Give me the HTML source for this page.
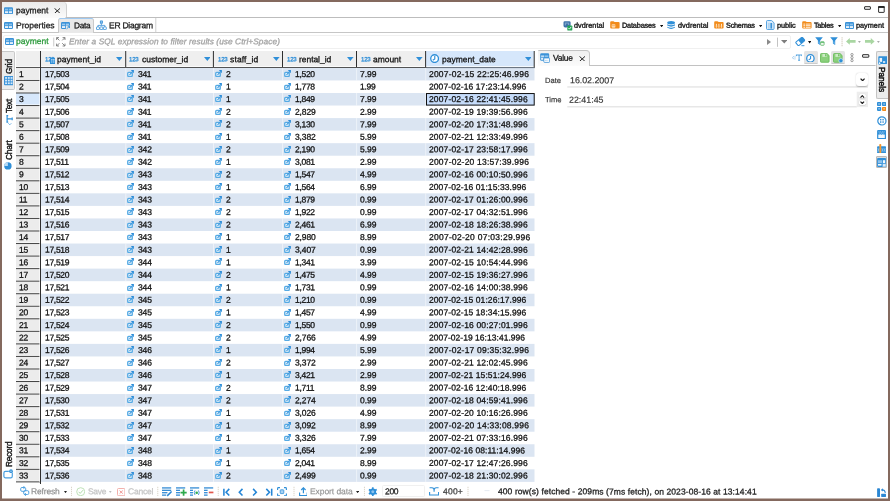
<!DOCTYPE html>
<html><head><meta charset="utf-8"><title>payment</title>
<style>
html,body{margin:0;padding:0;}
body{width:890px;height:501px;overflow:hidden;background:#84695e;font-family:"Liberation Sans",sans-serif;}
#app{position:absolute;left:0;top:0;width:890px;height:501px;overflow:hidden;will-change:transform;}
.b{position:absolute;display:block;}
.t{position:absolute;white-space:pre;display:block;-webkit-text-stroke:0.28px;}
</style></head><body><div id="app">

<svg class="b" style="left:2px;top:2px" width="886" height="497"><rect x="0.00" y="0.00" width="886.00" height="496.50" fill="#ffffff"/></svg>
<div class="b" style="left:2px;top:498px;width:886px;height:1px;background:#c2b4ae"></div>
<div class="b" style="left:2px;top:2px;width:63.5px;height:15.5px;background:linear-gradient(#ebebeb,#f4f4f4 60%,#fbfbfb);border-right:1px solid #d0d0d0;border-top-right-radius:4px;"></div>
<svg class="b" style="left:65px;top:17px" width="823" height="1"><rect x="0.50" y="0.00" width="822.50" height="1.00" fill="#bdbdbd"/></svg>
<svg class="b" style="left:4.00px;top:6.70px;" width="9" height="7.3" viewBox="0 0 9 7"><rect x="0" y="0" width="9" height="7" rx="1.2" fill="#3b92d8"/><rect x="1" y="1.6" width="3.1" height="1.7" fill="#8cc2ec"/><rect x="4.9" y="1.6" width="3.1" height="1.7" fill="#8cc2ec"/><rect x="1" y="4.1" width="3.1" height="1.9" fill="#e6f1fb"/><rect x="4.9" y="4.1" width="3.1" height="1.9" fill="#e6f1fb"/></svg>
<span class="t" style="left:16.10px;top:6px;font-size:8.50px;line-height:8.50px;color:#1a1a1a;transform:translateY(0.25px) rotate(0.05deg);letter-spacing:-0.033px;">payment</span>
<svg class="b" style="left:53.80px;top:7.70px;" width="6.6" height="5.8" viewBox="0 0 6.6 5.8"><path d="M0.5 0.3 L6.1 5.4 M6.1 0.3 L0.5 5.4" stroke="#1c1c1c" stroke-width="0.95" fill="none"/></svg>
<svg class="b" style="left:864.00px;top:5.80px;" width="7.2" height="4.2" viewBox="0 0 7.2 4.2"><rect x="0.6" y="0.7" width="5.8" height="2.6" rx="0.3" fill="#fff" stroke="#1c1c1c" stroke-width="0.95"/></svg>
<svg class="b" style="left:877.50px;top:6.00px;" width="7" height="7" viewBox="0 0 7 7"><rect x="0.6" y="0.6" width="5.6" height="5.8" rx="0.4" fill="#fff" stroke="#1c1c1c" stroke-width="0.9"/><rect x="0.2" y="0.2" width="6.4" height="1.7" fill="#1c1c1c"/></svg>
<div class="b" style="left:2.00px;top:32.00px;width:886.00px;height:1.00px;background:#c6c6c6;"></div>
<svg class="b" style="left:4.00px;top:22.00px;" width="9" height="7" viewBox="0 0 9 7"><rect x="0" y="0" width="9" height="7" rx="1.2" fill="#3b92d8"/><rect x="1" y="1.6" width="3.1" height="1.7" fill="#8cc2ec"/><rect x="4.9" y="1.6" width="3.1" height="1.7" fill="#8cc2ec"/><rect x="1" y="4.1" width="3.1" height="1.9" fill="#e6f1fb"/><rect x="4.9" y="4.1" width="3.1" height="1.9" fill="#e6f1fb"/></svg>
<span class="t" style="left:16.20px;top:21px;font-size:8.50px;line-height:8.50px;color:#1a1a1a;transform:translateY(0.30px) rotate(0.05deg);letter-spacing:-0.015px;">Properties</span>
<div class="b" style="left:58.4px;top:18px;width:35.4px;height:14.5px;background:#e9e9e9;border:1px solid #c9c9c9;border-bottom:none;border-top:1.4px solid #9fc9f1;border-radius:2.5px 2.5px 0 0;box-sizing:border-box;"></div>
<svg class="b" style="left:61.00px;top:22.00px;" width="9.5" height="7.5" viewBox="0 0 9.5 7.5"><rect x="0" y="0" width="9" height="7" rx="1.2" fill="#3b92d8"/><rect x="1" y="1.6" width="3.1" height="1.7" fill="#9ccaf0"/><rect x="4.9" y="1.6" width="3.1" height="1.7" fill="#9ccaf0"/><rect x="1" y="4.1" width="3.1" height="1.9" fill="#e6f1fb"/><rect x="4.9" y="3.6" width="4.6" height="3.9" fill="#e8e8e8"/><path d="M5.6 6.9 L8.4 4.3 M6.6 4.2 H8.5 V6.1" stroke="#2f8fd8" stroke-width="0.9" fill="none"/></svg>
<span class="t" style="left:73.90px;top:21px;font-size:8.30px;line-height:8.30px;color:#1a1a1a;transform:translateY(0.37px) rotate(0.05deg);letter-spacing:-0.300px;">Data</span>
<svg class="b" style="left:95.80px;top:20.30px;" width="10.8" height="10.2" viewBox="0 0 10.8 10.2"><rect x="3.9" y="0.4" width="3" height="3.4" rx="0.7" fill="#3b92d8"/><rect x="4.7" y="1.3" width="1.4" height="1.4" fill="#9ccaf0"/><path d="M5.4 3.8 V5.4 M1.9 7 V5.4 H8.9 V7" stroke="#3b92d8" stroke-width="0.8" fill="none"/><rect x="0.5" y="6.9" width="2.9" height="2.7" rx="0.6" fill="#fff" stroke="#3b92d8" stroke-width="0.85"/><rect x="3.95" y="6.9" width="2.9" height="2.7" rx="0.6" fill="#fff" stroke="#3b92d8" stroke-width="0.85"/><rect x="7.4" y="6.9" width="2.9" height="2.7" rx="0.6" fill="#fff" stroke="#3b92d8" stroke-width="0.85"/></svg>
<span class="t" style="left:109.00px;top:21px;font-size:8.50px;line-height:8.50px;color:#1a1a1a;transform:translateY(0.30px) rotate(0.05deg);letter-spacing:-0.254px;">ER Diagram</span>
<svg class="b" style="left:155px;top:18px" width="2" height="14"><rect x="0.30" y="0.00" width="1.00" height="14.00" fill="#cfcfcf"/></svg>
<svg class="b" style="left:563.00px;top:20.90px;" width="9.6" height="9.8" viewBox="0 0 9.6 9.8"><path d="M0.5 1.4 Q0.5 0.2 1.8 0.2 H6.2 Q7.6 0.2 7.6 1.6 V4.6 Q7.6 6.4 6 6.6 L5.2 6.6 L4.6 5.4 L3.8 6.6 H2.2 Q0.5 6.4 0.5 4.8 Z" fill="#3b70a8"/><path d="M2.3 1.5 V4.4 M4 1.2 V3.2 M5.7 1.6 V4" stroke="#c3d8ee" stroke-width="0.6"/><rect x="4.3" y="4.4" width="5" height="5.2" rx="0.9" fill="#25a457"/><path d="M5.5 7.1 L6.5 8.1 L8.2 5.9" stroke="#fff" stroke-width="0.9" fill="none"/></svg>
<span class="t" style="left:573.80px;top:21px;font-size:7.30px;line-height:7.30px;color:#222;transform:translateY(0.72px) rotate(0.05deg);letter-spacing:0.021px;-webkit-text-stroke:0.38px;">dvdrental</span>
<svg class="b" style="left:610.10px;top:21.30px;" width="9.8" height="7.8" viewBox="0 0 9.8 7.8"><path d="M0.2 1.2 Q0.2 0.2 1.2 0.2 H3.4 Q3.9 0.2 4.3 0.7 L4.7 1.1 H8.6 Q9.6 1.1 9.6 2.1 V6.6 Q9.6 7.6 8.6 7.6 H1.2 Q0.2 7.6 0.2 6.6 Z" fill="#f28c1c"/><rect x="1.6" y="2.9" width="3.8" height="3.9" rx="1" fill="#fcd7a8"/><path d="M1.6 4.2 H5.4" stroke="#f28c1c" stroke-width="0.5"/></svg>
<span class="t" style="left:621.70px;top:21px;font-size:7.30px;line-height:7.30px;color:#222;transform:translateY(0.72px) rotate(0.05deg);letter-spacing:-0.162px;-webkit-text-stroke:0.38px;">Databases</span>
<svg class="b" style="left:659.90px;top:24.70px;" width="3.2" height="2.3" viewBox="0 0 3.2 2.3"><path d="M0 0H3.2L1.6 2.3Z" fill="#111"/></svg>
<svg class="b" style="left:666.90px;top:21.20px;" width="8.2" height="8.4" viewBox="0 0 8.2 8.4"><ellipse cx="4.1" cy="1.8" rx="3.9" ry="1.7" fill="#2f8fd8"/><path d="M0.2 3.2 Q4.1 5.5 8 3.2 V4.6 Q4.1 6.9 0.2 4.6 Z" fill="#2f8fd8"/><path d="M0.2 5.7 Q4.1 8 8 5.7 V6.6 Q4.1 9.2 0.2 6.6 Z" fill="#2f8fd8"/></svg>
<span class="t" style="left:677.80px;top:21px;font-size:7.30px;line-height:7.30px;color:#222;transform:translateY(0.72px) rotate(0.05deg);letter-spacing:0.046px;-webkit-text-stroke:0.38px;">dvdrental</span>
<svg class="b" style="left:714.10px;top:21.30px;" width="9.8" height="7.8" viewBox="0 0 9.8 7.8"><path d="M0.2 1.2 Q0.2 0.2 1.2 0.2 H3.4 Q3.9 0.2 4.3 0.7 L4.7 1.1 H8.6 Q9.6 1.1 9.6 2.1 V6.6 Q9.6 7.6 8.6 7.6 H1.2 Q0.2 7.6 0.2 6.6 Z" fill="#f28c1c"/><g fill="#fff3e2"><rect x="1.9" y="2.8" width="0.9" height="3.8"/><rect x="4.45" y="2.8" width="0.9" height="3.8"/><rect x="7" y="2.8" width="0.9" height="3.8"/></g><path d="M1.2 5.2 H8.6" stroke="#f8b871" stroke-width="0.6"/></svg>
<span class="t" style="left:725.70px;top:21px;font-size:7.30px;line-height:7.30px;color:#222;transform:translateY(0.72px) rotate(0.05deg);letter-spacing:-0.238px;-webkit-text-stroke:0.38px;">Schemas</span>
<svg class="b" style="left:758.50px;top:24.70px;" width="3.2" height="2.3" viewBox="0 0 3.2 2.3"><path d="M0 0H3.2L1.6 2.3Z" fill="#111"/></svg>
<svg class="b" style="left:766.20px;top:20.30px;" width="8.6" height="10" viewBox="0 0 8.6 10"><path d="M0.5 1.5 Q0.5 0.5 1.5 0.5 H5.6 L8.1 2.9 V8.5 Q8.1 9.5 7.1 9.5 H1.5 Q0.5 9.5 0.5 8.5 Z" fill="#d9eaf9" stroke="#4a9de0" stroke-width="0.9"/><rect x="4.4" y="3" width="1.7" height="5.6" fill="#3b92d8"/><rect x="2.2" y="3" width="1.4" height="5.6" fill="#a9d0f1"/></svg>
<span class="t" style="left:777.10px;top:21px;font-size:7.30px;line-height:7.30px;color:#222;transform:translateY(0.72px) rotate(0.05deg);letter-spacing:-0.094px;-webkit-text-stroke:0.38px;">public</span>
<svg class="b" style="left:802.20px;top:21.30px;" width="9.8" height="7.8" viewBox="0 0 9.8 7.8"><path d="M0.2 1.2 Q0.2 0.2 1.2 0.2 H3.4 Q3.9 0.2 4.3 0.7 L4.7 1.1 H8.6 Q9.6 1.1 9.6 2.1 V6.6 Q9.6 7.6 8.6 7.6 H1.2 Q0.2 7.6 0.2 6.6 Z" fill="#f28c1c"/><g fill="#fff1de"><rect x="1.4" y="2.6" width="1.9" height="1"/><rect x="4" y="2.6" width="4.6" height="1"/><rect x="1.4" y="4.2" width="1.9" height="1"/><rect x="4" y="4.2" width="4.6" height="1"/><rect x="1.4" y="5.8" width="1.9" height="1"/><rect x="4" y="5.8" width="4.6" height="1"/></g></svg>
<span class="t" style="left:814.10px;top:21px;font-size:7.30px;line-height:7.30px;color:#222;transform:translateY(0.72px) rotate(0.05deg);letter-spacing:-0.300px;-webkit-text-stroke:0.38px;">Tables</span>
<svg class="b" style="left:837.70px;top:24.70px;" width="3.2" height="2.3" viewBox="0 0 3.2 2.3"><path d="M0 0H3.2L1.6 2.3Z" fill="#111"/></svg>
<svg class="b" style="left:845.00px;top:21.80px;" width="9" height="7" viewBox="0 0 9 7"><rect x="0" y="0" width="9" height="7" rx="1.2" fill="#3b92d8"/><rect x="1" y="1.6" width="3.1" height="1.7" fill="#8cc2ec"/><rect x="4.9" y="1.6" width="3.1" height="1.7" fill="#8cc2ec"/><rect x="1" y="4.1" width="3.1" height="1.9" fill="#e6f1fb"/><rect x="4.9" y="4.1" width="3.1" height="1.9" fill="#e6f1fb"/></svg>
<span class="t" style="left:856.10px;top:21px;font-size:7.30px;line-height:7.30px;color:#222;transform:translateY(0.72px) rotate(0.05deg);-webkit-text-stroke:0.38px;">payment</span>
<div class="b" style="left:3px;top:35px;width:788px;height:13.5px;border:1px solid #f0f0f0;border-radius:2px;box-sizing:border-box;background:#fff"></div>
<svg class="b" style="left:5.30px;top:38.20px;" width="9" height="7" viewBox="0 0 9 7"><rect x="0" y="0" width="9" height="7" rx="1.2" fill="#3b92d8"/><rect x="1" y="1.6" width="3.1" height="1.7" fill="#8cc2ec"/><rect x="4.9" y="1.6" width="3.1" height="1.7" fill="#8cc2ec"/><rect x="1" y="4.1" width="3.1" height="1.9" fill="#e6f1fb"/><rect x="4.9" y="4.1" width="3.1" height="1.9" fill="#e6f1fb"/></svg>
<span class="t" style="left:16.00px;top:37px;font-size:8.50px;line-height:8.50px;color:#2c9a3c;transform:translateY(0.10px) rotate(0.05deg);letter-spacing:-0.016px;">payment</span>
<svg class="b" style="left:53px;top:37px" width="2" height="10"><rect x="0.40" y="0.60" width="0.80" height="8.80" fill="#bdbdbd"/></svg>
<svg class="b" style="left:56.00px;top:37.00px;" width="9.6" height="9.6" viewBox="0 0 9.6 9.6"><g stroke="#6a6a6a" stroke-width="0.8" fill="none"><path d="M0.6 3 V0.6 H3 M0.8 0.8 L3.4 3.4"/><path d="M6.6 0.6 H9 V3 M8.8 0.8 L6.2 3.4"/><path d="M0.6 6.6 V9 H3 M0.8 8.8 L3.4 6.2"/><path d="M6.6 9 H9 V6.6 M8.8 8.8 L6.2 6.2"/></g></svg>
<span class="t" style="left:68.50px;top:37px;font-size:8.30px;line-height:8.30px;color:#a3a3a3;transform:translateY(0.27px) rotate(0.05deg);letter-spacing:0.076px;font-style:italic;">Enter a SQL expression to filter results (use Ctrl+Space)</span>
<svg class="b" style="left:767.00px;top:39.20px;" width="4" height="6" viewBox="0 0 4 6"><path d="M0 0 L4 3 L0 6Z" fill="#8a8a8a"/></svg>
<svg class="b" style="left:777px;top:37px" width="1" height="10"><rect x="0.20" y="0.60" width="0.80" height="9.20" fill="#b4b4b4"/></svg>
<svg class="b" style="left:780.60px;top:40.20px;" width="6.6" height="3.4" viewBox="0 0 6.6 3.4"><path d="M0 0H6.6L3.3 3.4Z" fill="#7d7d7d"/></svg>
<svg class="b" style="left:795.40px;top:36.80px;" width="11" height="10" viewBox="0 0 11 10"><g transform="rotate(-40 5.2 4.4)"><rect x="0.9" y="2.1" width="8.6" height="4.6" rx="1" fill="#fff" stroke="#2f8fd8" stroke-width="1"/><rect x="4.4" y="2.1" width="5.1" height="4.6" rx="0.8" fill="#2f8fd8"/></g><path d="M6.4 8.7 H9.4" stroke="#2f8fd8" stroke-width="0.9"/></svg>
<svg class="b" style="left:807.80px;top:41.20px;" width="3.3" height="2.4" viewBox="0 0 3.3 2.4"><path d="M0 0H3.3L1.65 2.4Z" fill="#111"/></svg>
<svg class="b" style="left:815.00px;top:37.30px;" width="10.5" height="9" viewBox="0 0 10.5 9"><path d="M0.2 0.3 H7.8 L5.2 3.6 V8 L2.9 6.6 V3.6 Z" fill="#2f8fd8"/><path d="M3.2 4.4 H4.9 V7.4 L3.2 6.4 Z" fill="#62aee6"/><rect x="5.6" y="4.8" width="3.5" height="3.5" rx="0.6" fill="#f3faf1" stroke="#5cb86a" stroke-width="0.8"/><rect x="5.5" y="4.7" width="3.7" height="1.1" fill="#5cb86a"/></svg>
<svg class="b" style="left:829.50px;top:37.30px;" width="10.5" height="9" viewBox="0 0 10.5 9"><path d="M0.2 0.3 H7.8 L5.2 3.6 V8 L2.9 6.6 V3.6 Z" fill="#2f8fd8"/><path d="M3.2 4.4 H4.9 V7.4 L3.2 6.4 Z" fill="#62aee6"/></svg>
<svg class="b" style="left:841px;top:37px" width="2" height="2"><rect x="0.60" y="0.40" width="0.90" height="1.00" fill="#bcb19b"/></svg>
<svg class="b" style="left:841px;top:39px" width="2" height="2"><rect x="0.60" y="0.35" width="0.90" height="1.00" fill="#bcb19b"/></svg>
<svg class="b" style="left:841px;top:41px" width="2" height="2"><rect x="0.60" y="0.30" width="0.90" height="1.00" fill="#bcb19b"/></svg>
<svg class="b" style="left:841px;top:43px" width="2" height="2"><rect x="0.60" y="0.25" width="0.90" height="1.00" fill="#bcb19b"/></svg>
<svg class="b" style="left:841px;top:45px" width="2" height="2"><rect x="0.60" y="0.20" width="0.90" height="1.00" fill="#bcb19b"/></svg>
<svg class="b" style="left:846.20px;top:38.40px;" width="10" height="6.8" viewBox="0 0 10 6.8"><path d="M0 3.4 L3.8 0 V2.05 H9.6 V4.75 H3.8 V6.8 Z" fill="#a9d6a2"/></svg>
<svg class="b" style="left:858.20px;top:41.30px;" width="2.8" height="1.9" viewBox="0 0 2.8 1.9"><path d="M0 0H2.8L1.4 1.9Z" fill="#a8a8a8"/></svg>
<svg class="b" style="left:864.80px;top:38.40px;" width="10" height="6.8" viewBox="0 0 10 6.8"><path d="M9.6 3.4 L5.8 0 V2.05 H0 V4.75 H5.8 V6.8 Z" fill="#a9d6a2"/></svg>
<svg class="b" style="left:877.00px;top:41.30px;" width="2.8" height="1.9" viewBox="0 0 2.8 1.9"><path d="M0 0H2.8L1.4 1.9Z" fill="#a8a8a8"/></svg>
<div class="b" style="left:2px;top:50.5px;width:12.5px;height:39.5px;background:#ececec;border:1px solid #c9c9c9;border-left:none;box-sizing:border-box;border-radius:0 2px 2px 0"></div>
<span class="t" style="left:5.15px;top:73.80px;font-size:8.30px;line-height:8.30px;color:#1a1a1a;letter-spacing:-0.226px;-webkit-text-stroke:0.4px;transform-origin:0 0;transform:rotate(-90deg);">Grid</span>
<svg class="b" style="left:3.90px;top:76.40px;" width="9.6" height="9.2" viewBox="0 0 9.6 9.2"><rect x="0" y="0" width="9.6" height="9.2" rx="1" fill="#3b92d8"/><g fill="#d9ebfa"><rect x="1.1" y="1.1" width="1.9" height="1.7"/><rect x="3.85" y="1.1" width="1.9" height="1.7"/><rect x="6.6" y="1.1" width="1.9" height="1.7"/><rect x="1.1" y="3.75" width="1.9" height="1.7"/><rect x="3.85" y="3.75" width="1.9" height="1.7"/><rect x="6.6" y="3.75" width="1.9" height="1.7"/><rect x="1.1" y="6.4" width="1.9" height="1.7"/><rect x="3.85" y="6.4" width="1.9" height="1.7"/><rect x="6.6" y="6.4" width="1.9" height="1.7"/></g></svg>
<span class="t" style="left:5.15px;top:113.20px;font-size:8.30px;line-height:8.30px;color:#1a1a1a;letter-spacing:-0.340px;-webkit-text-stroke:0.4px;transform-origin:0 0;transform:rotate(-90deg);">Text</span>
<svg class="b" style="left:6.00px;top:115.40px;" width="6.8" height="10.6" viewBox="0 0 6.8 10.6"><path d="M1.1 0.5 V7.3 M0.4 0.6 H2.2 M0.4 7.2 H2.2 M1.1 3.9 H6.2 M6.2 2.5 V5.3" stroke="#2f8fd8" stroke-width="1.2" fill="none"/><path d="M2.3 8.3 L3.8 9.8 L5.3 8.3" stroke="#5aa7e2" stroke-width="0.85" fill="none"/></svg>
<span class="t" style="left:5.15px;top:159.60px;font-size:8.30px;line-height:8.30px;color:#1a1a1a;letter-spacing:-0.124px;-webkit-text-stroke:0.4px;transform-origin:0 0;transform:rotate(-90deg);">Chart</span>
<svg class="b" style="left:4.20px;top:161.80px;" width="7.8" height="7.8" viewBox="0 0 7.8 7.8"><circle cx="3.9" cy="3.9" r="3.7" fill="#2f8fd8"/><path d="M3.9 3.9 V0.2 A3.7 3.7 0 0 0 0.2 3.9 Z" fill="#b9dbf5"/></svg>
<span class="t" style="left:5.15px;top:467.20px;font-size:8.30px;line-height:8.30px;color:#1a1a1a;letter-spacing:-0.231px;-webkit-text-stroke:0.4px;transform-origin:0 0;transform:rotate(-90deg);">Record</span>
<svg class="b" style="left:3.30px;top:469.20px;" width="10.6" height="9.8" viewBox="0 0 10.6 9.8"><rect x="0.9" y="2.4" width="8.4" height="6.4" rx="1.6" fill="#fff" stroke="#4a9fe0" stroke-width="1.2"/><circle cx="8" cy="2.2" r="2.1" fill="#fff"/><circle cx="8" cy="2.2" r="1.85" fill="#2f8fd8"/><path d="M7 2.2 H9" stroke="#cfe6f8" stroke-width="0.7"/></svg>
<svg class="b" style="left:16px;top:51px" width="25" height="16"><rect x="0.00" y="0.00" width="24.50" height="16.00" fill="#efefef"/></svg>
<svg class="b" style="left:41px;top:51px" width="85" height="16"><rect x="0.00" y="0.00" width="84.50" height="15.50" fill="#efefef"/></svg>
<svg class="b" style="left:126px;top:51px" width="88" height="16"><rect x="0.00" y="0.00" width="87.20" height="15.50" fill="#efefef"/></svg>
<svg class="b" style="left:214px;top:51px" width="69" height="16"><rect x="0.00" y="0.00" width="68.30" height="15.50" fill="#efefef"/></svg>
<svg class="b" style="left:283px;top:51px" width="74" height="16"><rect x="0.00" y="0.00" width="73.30" height="15.50" fill="#efefef"/></svg>
<svg class="b" style="left:357px;top:51px" width="69" height="16"><rect x="0.00" y="0.00" width="68.40" height="15.50" fill="#efefef"/></svg>
<svg class="b" style="left:426px;top:51px" width="108" height="16"><rect x="0.00" y="0.00" width="108.00" height="15.50" fill="#d6e7fb"/></svg>
<svg class="b" style="left:16px;top:66px" width="518" height="1"><rect x="0.00" y="0.50" width="518.00" height="0.50" fill="#ffffff"/></svg>
<div class="b" style="left:40.00px;top:51.00px;width:1.00px;height:17.00px;background:#2e2e2e;"></div>
<svg class="b" style="left:125px;top:51px" width="2" height="17"><rect x="0.20" y="0.00" width="1.00" height="16.50" fill="#2e2e2e"/></svg>
<svg class="b" style="left:212px;top:51px" width="2" height="17"><rect x="0.90" y="0.00" width="1.00" height="16.50" fill="#2e2e2e"/></svg>
<svg class="b" style="left:282px;top:51px" width="1" height="17"><rect x="0.00" y="0.00" width="1.00" height="16.50" fill="#2e2e2e"/></svg>
<svg class="b" style="left:356px;top:51px" width="1" height="17"><rect x="0.00" y="0.00" width="1.00" height="16.50" fill="#2e2e2e"/></svg>
<svg class="b" style="left:425px;top:51px" width="2" height="17"><rect x="0.10" y="0.00" width="1.00" height="16.50" fill="#2e2e2e"/></svg>
<svg class="b" style="left:533px;top:51px" width="2" height="17"><rect x="0.70" y="0.00" width="1.00" height="16.50" fill="#2e2e2e"/></svg>
<svg class="b" style="left:16px;top:67px" width="519" height="2"><rect x="0.00" y="0.10" width="518.60" height="1.00" fill="#2e2e2e"/></svg>
<span class="t" style="left:45.00px;top:56px;font-size:6.10px;line-height:6.10px;color:#2f8fd8;transform:translateY(0.34px) rotate(0.05deg);letter-spacing:-0.238px;-webkit-text-stroke:0.28px;">123</span>
<span class="t" style="left:57.00px;top:55px;font-size:8.50px;line-height:8.50px;color:#111;transform:translateY(0.35px) rotate(0.05deg);letter-spacing:0.007px;">payment_id</span>
<svg class="b" style="left:115.80px;top:57.10px;" width="6.6" height="4" viewBox="0 0 6.6 4"><path d="M0 0H6.6 L3.3 4 Z" fill="#2f8fd8"/></svg>
<span class="t" style="left:129.40px;top:56px;font-size:6.10px;line-height:6.10px;color:#2f8fd8;transform:translateY(0.34px) rotate(0.05deg);letter-spacing:-0.238px;-webkit-text-stroke:0.28px;">123</span>
<span class="t" style="left:141.90px;top:55px;font-size:8.50px;line-height:8.50px;color:#111;transform:translateY(0.35px) rotate(0.05deg);letter-spacing:-0.019px;">customer_id</span>
<svg class="b" style="left:203.80px;top:57.10px;" width="6.6" height="4" viewBox="0 0 6.6 4"><path d="M0 0H6.6 L3.3 4 Z" fill="#2f8fd8"/></svg>
<span class="t" style="left:217.50px;top:56px;font-size:6.10px;line-height:6.10px;color:#2f8fd8;transform:translateY(0.34px) rotate(0.05deg);letter-spacing:-0.238px;-webkit-text-stroke:0.28px;">123</span>
<span class="t" style="left:229.80px;top:55px;font-size:8.50px;line-height:8.50px;color:#111;transform:translateY(0.35px) rotate(0.05deg);letter-spacing:0.136px;">staff_id</span>
<svg class="b" style="left:273.00px;top:57.10px;" width="6.6" height="4" viewBox="0 0 6.6 4"><path d="M0 0H6.6 L3.3 4 Z" fill="#2f8fd8"/></svg>
<span class="t" style="left:286.50px;top:56px;font-size:6.10px;line-height:6.10px;color:#2f8fd8;transform:translateY(0.34px) rotate(0.05deg);letter-spacing:-0.238px;-webkit-text-stroke:0.28px;">123</span>
<span class="t" style="left:298.80px;top:55px;font-size:8.50px;line-height:8.50px;color:#111;transform:translateY(0.35px) rotate(0.05deg);letter-spacing:-0.050px;">rental_id</span>
<svg class="b" style="left:347.00px;top:57.10px;" width="6.6" height="4" viewBox="0 0 6.6 4"><path d="M0 0H6.6 L3.3 4 Z" fill="#2f8fd8"/></svg>
<span class="t" style="left:360.60px;top:56px;font-size:6.10px;line-height:6.10px;color:#2f8fd8;transform:translateY(0.34px) rotate(0.05deg);letter-spacing:-0.238px;-webkit-text-stroke:0.28px;">123</span>
<span class="t" style="left:372.90px;top:55px;font-size:8.50px;line-height:8.50px;color:#111;transform:translateY(0.35px) rotate(0.05deg);letter-spacing:-0.050px;">amount</span>
<svg class="b" style="left:416.00px;top:57.10px;" width="6.6" height="4" viewBox="0 0 6.6 4"><path d="M0 0H6.6 L3.3 4 Z" fill="#2f8fd8"/></svg>
<span class="t" style="left:441.90px;top:55px;font-size:8.50px;line-height:8.50px;color:#111;transform:translateY(0.35px) rotate(0.05deg);letter-spacing:-0.015px;">payment_date</span>
<svg class="b" style="left:524.60px;top:57.10px;" width="6.6" height="4" viewBox="0 0 6.6 4"><path d="M0 0H6.6 L3.3 4 Z" fill="#2f8fd8"/></svg>
<svg class="b" style="left:49.60px;top:58.00px;" width="5.6" height="6.4" viewBox="0 0 5.6 6.4"><rect x="0" y="0" width="5.6" height="6.4" rx="0.8" fill="#2f8fd8"/><path d="M1.8 1.2 V5 M3.8 1.2 V5 M1 1.6 H2.6 M3 1.6 H4.6" stroke="#bfe0f8" stroke-width="0.7"/></svg>
<svg class="b" style="left:430.10px;top:54.30px;" width="9.2" height="9.2" viewBox="0 0 10 10"><circle cx="5" cy="5" r="4.2" fill="#fff" stroke="#2f8fd8" stroke-width="1.45"/><path d="M5.2 2.3 V5.3 L3 6.7" stroke="#2f8fd8" stroke-width="1.25" fill="none"/></svg>
<svg class="b" style="left:0.00px;top:0.00px;" width="890" height="501" viewBox="0 0 890 501"><rect x="16" y="67.900" width="24.5" height="12.545" fill="#ececec"/><rect x="41" y="67.900" width="493.5" height="12.545" fill="#dbe5f2"/><rect x="125.30" y="67.900" width="1" height="12.545" fill="#ffffff" fill-opacity="0.5"/><rect x="213.00" y="67.900" width="1" height="12.545" fill="#ffffff" fill-opacity="0.5"/><rect x="282.10" y="67.900" width="1" height="12.545" fill="#ffffff" fill-opacity="0.5"/><rect x="356.10" y="67.900" width="1" height="12.545" fill="#ffffff" fill-opacity="0.5"/><rect x="425.20" y="67.900" width="1" height="12.545" fill="#ffffff" fill-opacity="0.5"/><rect x="16" y="80.445" width="24.5" height="12.545" fill="#ececec"/><rect x="16" y="92.990" width="24.5" height="12.545" fill="#d6e7fb"/><rect x="41" y="92.990" width="493.5" height="12.545" fill="#dbe5f2"/><rect x="125.30" y="92.990" width="1" height="12.545" fill="#ffffff" fill-opacity="0.5"/><rect x="213.00" y="92.990" width="1" height="12.545" fill="#ffffff" fill-opacity="0.5"/><rect x="282.10" y="92.990" width="1" height="12.545" fill="#ffffff" fill-opacity="0.5"/><rect x="356.10" y="92.990" width="1" height="12.545" fill="#ffffff" fill-opacity="0.5"/><rect x="425.20" y="92.990" width="1" height="12.545" fill="#ffffff" fill-opacity="0.5"/><rect x="426.5" y="93.540" width="107.7" height="11.545" fill="#c6dcfa" stroke="#111" stroke-width="1"/><rect x="16" y="105.535" width="24.5" height="12.545" fill="#ececec"/><rect x="16" y="118.080" width="24.5" height="12.545" fill="#ececec"/><rect x="41" y="118.080" width="493.5" height="12.545" fill="#dbe5f2"/><rect x="125.30" y="118.080" width="1" height="12.545" fill="#ffffff" fill-opacity="0.5"/><rect x="213.00" y="118.080" width="1" height="12.545" fill="#ffffff" fill-opacity="0.5"/><rect x="282.10" y="118.080" width="1" height="12.545" fill="#ffffff" fill-opacity="0.5"/><rect x="356.10" y="118.080" width="1" height="12.545" fill="#ffffff" fill-opacity="0.5"/><rect x="425.20" y="118.080" width="1" height="12.545" fill="#ffffff" fill-opacity="0.5"/><rect x="16" y="130.625" width="24.5" height="12.545" fill="#ececec"/><rect x="16" y="143.170" width="24.5" height="12.545" fill="#ececec"/><rect x="41" y="143.170" width="493.5" height="12.545" fill="#dbe5f2"/><rect x="125.30" y="143.170" width="1" height="12.545" fill="#ffffff" fill-opacity="0.5"/><rect x="213.00" y="143.170" width="1" height="12.545" fill="#ffffff" fill-opacity="0.5"/><rect x="282.10" y="143.170" width="1" height="12.545" fill="#ffffff" fill-opacity="0.5"/><rect x="356.10" y="143.170" width="1" height="12.545" fill="#ffffff" fill-opacity="0.5"/><rect x="425.20" y="143.170" width="1" height="12.545" fill="#ffffff" fill-opacity="0.5"/><rect x="16" y="155.715" width="24.5" height="12.545" fill="#ececec"/><rect x="16" y="168.260" width="24.5" height="12.545" fill="#ececec"/><rect x="41" y="168.260" width="493.5" height="12.545" fill="#dbe5f2"/><rect x="125.30" y="168.260" width="1" height="12.545" fill="#ffffff" fill-opacity="0.5"/><rect x="213.00" y="168.260" width="1" height="12.545" fill="#ffffff" fill-opacity="0.5"/><rect x="282.10" y="168.260" width="1" height="12.545" fill="#ffffff" fill-opacity="0.5"/><rect x="356.10" y="168.260" width="1" height="12.545" fill="#ffffff" fill-opacity="0.5"/><rect x="425.20" y="168.260" width="1" height="12.545" fill="#ffffff" fill-opacity="0.5"/><rect x="16" y="180.805" width="24.5" height="12.545" fill="#ececec"/><rect x="16" y="193.350" width="24.5" height="12.545" fill="#ececec"/><rect x="41" y="193.350" width="493.5" height="12.545" fill="#dbe5f2"/><rect x="125.30" y="193.350" width="1" height="12.545" fill="#ffffff" fill-opacity="0.5"/><rect x="213.00" y="193.350" width="1" height="12.545" fill="#ffffff" fill-opacity="0.5"/><rect x="282.10" y="193.350" width="1" height="12.545" fill="#ffffff" fill-opacity="0.5"/><rect x="356.10" y="193.350" width="1" height="12.545" fill="#ffffff" fill-opacity="0.5"/><rect x="425.20" y="193.350" width="1" height="12.545" fill="#ffffff" fill-opacity="0.5"/><rect x="16" y="205.895" width="24.5" height="12.545" fill="#ececec"/><rect x="16" y="218.440" width="24.5" height="12.545" fill="#ececec"/><rect x="41" y="218.440" width="493.5" height="12.545" fill="#dbe5f2"/><rect x="125.30" y="218.440" width="1" height="12.545" fill="#ffffff" fill-opacity="0.5"/><rect x="213.00" y="218.440" width="1" height="12.545" fill="#ffffff" fill-opacity="0.5"/><rect x="282.10" y="218.440" width="1" height="12.545" fill="#ffffff" fill-opacity="0.5"/><rect x="356.10" y="218.440" width="1" height="12.545" fill="#ffffff" fill-opacity="0.5"/><rect x="425.20" y="218.440" width="1" height="12.545" fill="#ffffff" fill-opacity="0.5"/><rect x="16" y="230.985" width="24.5" height="12.545" fill="#ececec"/><rect x="16" y="243.530" width="24.5" height="12.545" fill="#ececec"/><rect x="41" y="243.530" width="493.5" height="12.545" fill="#dbe5f2"/><rect x="125.30" y="243.530" width="1" height="12.545" fill="#ffffff" fill-opacity="0.5"/><rect x="213.00" y="243.530" width="1" height="12.545" fill="#ffffff" fill-opacity="0.5"/><rect x="282.10" y="243.530" width="1" height="12.545" fill="#ffffff" fill-opacity="0.5"/><rect x="356.10" y="243.530" width="1" height="12.545" fill="#ffffff" fill-opacity="0.5"/><rect x="425.20" y="243.530" width="1" height="12.545" fill="#ffffff" fill-opacity="0.5"/><rect x="16" y="256.075" width="24.5" height="12.545" fill="#ececec"/><rect x="16" y="268.620" width="24.5" height="12.545" fill="#ececec"/><rect x="41" y="268.620" width="493.5" height="12.545" fill="#dbe5f2"/><rect x="125.30" y="268.620" width="1" height="12.545" fill="#ffffff" fill-opacity="0.5"/><rect x="213.00" y="268.620" width="1" height="12.545" fill="#ffffff" fill-opacity="0.5"/><rect x="282.10" y="268.620" width="1" height="12.545" fill="#ffffff" fill-opacity="0.5"/><rect x="356.10" y="268.620" width="1" height="12.545" fill="#ffffff" fill-opacity="0.5"/><rect x="425.20" y="268.620" width="1" height="12.545" fill="#ffffff" fill-opacity="0.5"/><rect x="16" y="281.165" width="24.5" height="12.545" fill="#ececec"/><rect x="16" y="293.710" width="24.5" height="12.545" fill="#ececec"/><rect x="41" y="293.710" width="493.5" height="12.545" fill="#dbe5f2"/><rect x="125.30" y="293.710" width="1" height="12.545" fill="#ffffff" fill-opacity="0.5"/><rect x="213.00" y="293.710" width="1" height="12.545" fill="#ffffff" fill-opacity="0.5"/><rect x="282.10" y="293.710" width="1" height="12.545" fill="#ffffff" fill-opacity="0.5"/><rect x="356.10" y="293.710" width="1" height="12.545" fill="#ffffff" fill-opacity="0.5"/><rect x="425.20" y="293.710" width="1" height="12.545" fill="#ffffff" fill-opacity="0.5"/><rect x="16" y="306.255" width="24.5" height="12.545" fill="#ececec"/><rect x="16" y="318.800" width="24.5" height="12.545" fill="#ececec"/><rect x="41" y="318.800" width="493.5" height="12.545" fill="#dbe5f2"/><rect x="125.30" y="318.800" width="1" height="12.545" fill="#ffffff" fill-opacity="0.5"/><rect x="213.00" y="318.800" width="1" height="12.545" fill="#ffffff" fill-opacity="0.5"/><rect x="282.10" y="318.800" width="1" height="12.545" fill="#ffffff" fill-opacity="0.5"/><rect x="356.10" y="318.800" width="1" height="12.545" fill="#ffffff" fill-opacity="0.5"/><rect x="425.20" y="318.800" width="1" height="12.545" fill="#ffffff" fill-opacity="0.5"/><rect x="16" y="331.345" width="24.5" height="12.545" fill="#ececec"/><rect x="16" y="343.890" width="24.5" height="12.545" fill="#ececec"/><rect x="41" y="343.890" width="493.5" height="12.545" fill="#dbe5f2"/><rect x="125.30" y="343.890" width="1" height="12.545" fill="#ffffff" fill-opacity="0.5"/><rect x="213.00" y="343.890" width="1" height="12.545" fill="#ffffff" fill-opacity="0.5"/><rect x="282.10" y="343.890" width="1" height="12.545" fill="#ffffff" fill-opacity="0.5"/><rect x="356.10" y="343.890" width="1" height="12.545" fill="#ffffff" fill-opacity="0.5"/><rect x="425.20" y="343.890" width="1" height="12.545" fill="#ffffff" fill-opacity="0.5"/><rect x="16" y="356.435" width="24.5" height="12.545" fill="#ececec"/><rect x="16" y="368.980" width="24.5" height="12.545" fill="#ececec"/><rect x="41" y="368.980" width="493.5" height="12.545" fill="#dbe5f2"/><rect x="125.30" y="368.980" width="1" height="12.545" fill="#ffffff" fill-opacity="0.5"/><rect x="213.00" y="368.980" width="1" height="12.545" fill="#ffffff" fill-opacity="0.5"/><rect x="282.10" y="368.980" width="1" height="12.545" fill="#ffffff" fill-opacity="0.5"/><rect x="356.10" y="368.980" width="1" height="12.545" fill="#ffffff" fill-opacity="0.5"/><rect x="425.20" y="368.980" width="1" height="12.545" fill="#ffffff" fill-opacity="0.5"/><rect x="16" y="381.525" width="24.5" height="12.545" fill="#ececec"/><rect x="16" y="394.070" width="24.5" height="12.545" fill="#ececec"/><rect x="41" y="394.070" width="493.5" height="12.545" fill="#dbe5f2"/><rect x="125.30" y="394.070" width="1" height="12.545" fill="#ffffff" fill-opacity="0.5"/><rect x="213.00" y="394.070" width="1" height="12.545" fill="#ffffff" fill-opacity="0.5"/><rect x="282.10" y="394.070" width="1" height="12.545" fill="#ffffff" fill-opacity="0.5"/><rect x="356.10" y="394.070" width="1" height="12.545" fill="#ffffff" fill-opacity="0.5"/><rect x="425.20" y="394.070" width="1" height="12.545" fill="#ffffff" fill-opacity="0.5"/><rect x="16" y="406.615" width="24.5" height="12.545" fill="#ececec"/><rect x="16" y="419.160" width="24.5" height="12.545" fill="#ececec"/><rect x="41" y="419.160" width="493.5" height="12.545" fill="#dbe5f2"/><rect x="125.30" y="419.160" width="1" height="12.545" fill="#ffffff" fill-opacity="0.5"/><rect x="213.00" y="419.160" width="1" height="12.545" fill="#ffffff" fill-opacity="0.5"/><rect x="282.10" y="419.160" width="1" height="12.545" fill="#ffffff" fill-opacity="0.5"/><rect x="356.10" y="419.160" width="1" height="12.545" fill="#ffffff" fill-opacity="0.5"/><rect x="425.20" y="419.160" width="1" height="12.545" fill="#ffffff" fill-opacity="0.5"/><rect x="16" y="431.705" width="24.5" height="12.545" fill="#ececec"/><rect x="16" y="444.250" width="24.5" height="12.545" fill="#ececec"/><rect x="41" y="444.250" width="493.5" height="12.545" fill="#dbe5f2"/><rect x="125.30" y="444.250" width="1" height="12.545" fill="#ffffff" fill-opacity="0.5"/><rect x="213.00" y="444.250" width="1" height="12.545" fill="#ffffff" fill-opacity="0.5"/><rect x="282.10" y="444.250" width="1" height="12.545" fill="#ffffff" fill-opacity="0.5"/><rect x="356.10" y="444.250" width="1" height="12.545" fill="#ffffff" fill-opacity="0.5"/><rect x="425.20" y="444.250" width="1" height="12.545" fill="#ffffff" fill-opacity="0.5"/><rect x="16" y="456.795" width="24.5" height="12.545" fill="#ececec"/><rect x="16" y="469.340" width="24.5" height="12.545" fill="#ececec"/><rect x="41" y="469.340" width="493.5" height="12.545" fill="#dbe5f2"/><rect x="125.30" y="469.340" width="1" height="12.545" fill="#ffffff" fill-opacity="0.5"/><rect x="213.00" y="469.340" width="1" height="12.545" fill="#ffffff" fill-opacity="0.5"/><rect x="282.10" y="469.340" width="1" height="12.545" fill="#ffffff" fill-opacity="0.5"/><rect x="356.10" y="469.340" width="1" height="12.545" fill="#ffffff" fill-opacity="0.5"/><rect x="425.20" y="469.340" width="1" height="12.545" fill="#ffffff" fill-opacity="0.5"/><rect x="16" y="79.245" width="24.5" height="0.7" fill="#ffffff" fill-opacity="0.75"/><rect x="16" y="79.945" width="24.5" height="1" fill="#444444"/><rect x="16" y="91.790" width="24.5" height="0.7" fill="#ffffff" fill-opacity="0.75"/><rect x="16" y="92.490" width="24.5" height="1" fill="#444444"/><rect x="16" y="104.335" width="24.5" height="0.7" fill="#ffffff" fill-opacity="0.75"/><rect x="16" y="105.035" width="24.5" height="1" fill="#444444"/><rect x="16" y="116.880" width="24.5" height="0.7" fill="#ffffff" fill-opacity="0.75"/><rect x="16" y="117.580" width="24.5" height="1" fill="#444444"/><rect x="16" y="129.425" width="24.5" height="0.7" fill="#ffffff" fill-opacity="0.75"/><rect x="16" y="130.125" width="24.5" height="1" fill="#444444"/><rect x="16" y="141.970" width="24.5" height="0.7" fill="#ffffff" fill-opacity="0.75"/><rect x="16" y="142.670" width="24.5" height="1" fill="#444444"/><rect x="16" y="154.515" width="24.5" height="0.7" fill="#ffffff" fill-opacity="0.75"/><rect x="16" y="155.215" width="24.5" height="1" fill="#444444"/><rect x="16" y="167.060" width="24.5" height="0.7" fill="#ffffff" fill-opacity="0.75"/><rect x="16" y="167.760" width="24.5" height="1" fill="#444444"/><rect x="16" y="179.605" width="24.5" height="0.7" fill="#ffffff" fill-opacity="0.75"/><rect x="16" y="180.305" width="24.5" height="1" fill="#444444"/><rect x="16" y="192.150" width="24.5" height="0.7" fill="#ffffff" fill-opacity="0.75"/><rect x="16" y="192.850" width="24.5" height="1" fill="#444444"/><rect x="16" y="204.695" width="24.5" height="0.7" fill="#ffffff" fill-opacity="0.75"/><rect x="16" y="205.395" width="24.5" height="1" fill="#444444"/><rect x="16" y="217.240" width="24.5" height="0.7" fill="#ffffff" fill-opacity="0.75"/><rect x="16" y="217.940" width="24.5" height="1" fill="#444444"/><rect x="16" y="229.785" width="24.5" height="0.7" fill="#ffffff" fill-opacity="0.75"/><rect x="16" y="230.485" width="24.5" height="1" fill="#444444"/><rect x="16" y="242.330" width="24.5" height="0.7" fill="#ffffff" fill-opacity="0.75"/><rect x="16" y="243.030" width="24.5" height="1" fill="#444444"/><rect x="16" y="254.875" width="24.5" height="0.7" fill="#ffffff" fill-opacity="0.75"/><rect x="16" y="255.575" width="24.5" height="1" fill="#444444"/><rect x="16" y="267.420" width="24.5" height="0.7" fill="#ffffff" fill-opacity="0.75"/><rect x="16" y="268.120" width="24.5" height="1" fill="#444444"/><rect x="16" y="279.965" width="24.5" height="0.7" fill="#ffffff" fill-opacity="0.75"/><rect x="16" y="280.665" width="24.5" height="1" fill="#444444"/><rect x="16" y="292.510" width="24.5" height="0.7" fill="#ffffff" fill-opacity="0.75"/><rect x="16" y="293.210" width="24.5" height="1" fill="#444444"/><rect x="16" y="305.055" width="24.5" height="0.7" fill="#ffffff" fill-opacity="0.75"/><rect x="16" y="305.755" width="24.5" height="1" fill="#444444"/><rect x="16" y="317.600" width="24.5" height="0.7" fill="#ffffff" fill-opacity="0.75"/><rect x="16" y="318.300" width="24.5" height="1" fill="#444444"/><rect x="16" y="330.145" width="24.5" height="0.7" fill="#ffffff" fill-opacity="0.75"/><rect x="16" y="330.845" width="24.5" height="1" fill="#444444"/><rect x="16" y="342.690" width="24.5" height="0.7" fill="#ffffff" fill-opacity="0.75"/><rect x="16" y="343.390" width="24.5" height="1" fill="#444444"/><rect x="16" y="355.235" width="24.5" height="0.7" fill="#ffffff" fill-opacity="0.75"/><rect x="16" y="355.935" width="24.5" height="1" fill="#444444"/><rect x="16" y="367.780" width="24.5" height="0.7" fill="#ffffff" fill-opacity="0.75"/><rect x="16" y="368.480" width="24.5" height="1" fill="#444444"/><rect x="16" y="380.325" width="24.5" height="0.7" fill="#ffffff" fill-opacity="0.75"/><rect x="16" y="381.025" width="24.5" height="1" fill="#444444"/><rect x="16" y="392.870" width="24.5" height="0.7" fill="#ffffff" fill-opacity="0.75"/><rect x="16" y="393.570" width="24.5" height="1" fill="#444444"/><rect x="16" y="405.415" width="24.5" height="0.7" fill="#ffffff" fill-opacity="0.75"/><rect x="16" y="406.115" width="24.5" height="1" fill="#444444"/><rect x="16" y="417.960" width="24.5" height="0.7" fill="#ffffff" fill-opacity="0.75"/><rect x="16" y="418.660" width="24.5" height="1" fill="#444444"/><rect x="16" y="430.505" width="24.5" height="0.7" fill="#ffffff" fill-opacity="0.75"/><rect x="16" y="431.205" width="24.5" height="1" fill="#444444"/><rect x="16" y="443.050" width="24.5" height="0.7" fill="#ffffff" fill-opacity="0.75"/><rect x="16" y="443.750" width="24.5" height="1" fill="#444444"/><rect x="16" y="455.595" width="24.5" height="0.7" fill="#ffffff" fill-opacity="0.75"/><rect x="16" y="456.295" width="24.5" height="1" fill="#444444"/><rect x="16" y="468.140" width="24.5" height="0.7" fill="#ffffff" fill-opacity="0.75"/><rect x="16" y="468.840" width="24.5" height="1" fill="#444444"/><rect x="16" y="480.685" width="24.5" height="0.7" fill="#ffffff" fill-opacity="0.75"/><rect x="16" y="481.385" width="24.5" height="1" fill="#444444"/><rect x="39.1" y="68" width="0.8" height="414" fill="#ffffff" fill-opacity="0.7"/></svg>
<span class="t" style="left:19.10px;top:70px;font-size:8.50px;line-height:8.50px;color:#111;transform:translateY(0.00px) rotate(0.05deg);">1</span>
<span class="t" style="left:44.90px;top:70px;font-size:8.50px;line-height:8.50px;color:#111;transform:translateY(0.00px) rotate(0.05deg);letter-spacing:-0.300px;">17,503</span>
<svg class="b" style="left:127.30px;top:70.30px;" width="7" height="7" viewBox="0 0 7 7"><rect x="0.75" y="2.35" width="4.5" height="4.1" rx="0.9" fill="#f4f9fd" stroke="#55aae4" stroke-width="1.35"/><path d="M4.2 1.6 H6 V3.6" stroke="#dbe5f2" stroke-width="1.2" fill="none" opacity="0"/><path d="M2.5 4.9 L5.6 1.7" stroke="#3f9be0" stroke-width="1.15" fill="none"/><path d="M3.8 0.1 H6.9 V3.2 Z" fill="#2a8bd8"/></svg>
<span class="t" style="left:137.70px;top:70px;font-size:8.50px;line-height:8.50px;color:#111;transform:translateY(0.00px) rotate(0.05deg);letter-spacing:-0.300px;">341</span>
<svg class="b" style="left:215.20px;top:70.30px;" width="7" height="7" viewBox="0 0 7 7"><rect x="0.75" y="2.35" width="4.5" height="4.1" rx="0.9" fill="#f4f9fd" stroke="#55aae4" stroke-width="1.35"/><path d="M4.2 1.6 H6 V3.6" stroke="#dbe5f2" stroke-width="1.2" fill="none" opacity="0"/><path d="M2.5 4.9 L5.6 1.7" stroke="#3f9be0" stroke-width="1.15" fill="none"/><path d="M3.8 0.1 H6.9 V3.2 Z" fill="#2a8bd8"/></svg>
<span class="t" style="left:225.60px;top:70px;font-size:8.50px;line-height:8.50px;color:#111;transform:translateY(0.00px) rotate(0.05deg);">2</span>
<svg class="b" style="left:284.30px;top:70.30px;" width="7" height="7" viewBox="0 0 7 7"><rect x="0.75" y="2.35" width="4.5" height="4.1" rx="0.9" fill="#f4f9fd" stroke="#55aae4" stroke-width="1.35"/><path d="M4.2 1.6 H6 V3.6" stroke="#dbe5f2" stroke-width="1.2" fill="none" opacity="0"/><path d="M2.5 4.9 L5.6 1.7" stroke="#3f9be0" stroke-width="1.15" fill="none"/><path d="M3.8 0.1 H6.9 V3.2 Z" fill="#2a8bd8"/></svg>
<span class="t" style="left:294.80px;top:70px;font-size:8.50px;line-height:8.50px;color:#111;transform:translateY(0.00px) rotate(0.05deg);letter-spacing:-0.300px;">1,520</span>
<span class="t" style="left:360.30px;top:70px;font-size:8.50px;line-height:8.50px;color:#111;transform:translateY(0.00px) rotate(0.05deg);letter-spacing:-0.014px;">7.99</span>
<span class="t" style="left:429.20px;top:70px;font-size:8.50px;line-height:8.50px;color:#111;transform:translateY(0.00px) rotate(0.05deg);letter-spacing:0.202px;">2007-02-15 22:25:46.996</span>
<span class="t" style="left:19.10px;top:82px;font-size:8.50px;line-height:8.50px;color:#111;transform:translateY(0.55px) rotate(0.05deg);">2</span>
<span class="t" style="left:44.90px;top:82px;font-size:8.50px;line-height:8.50px;color:#111;transform:translateY(0.55px) rotate(0.05deg);letter-spacing:-0.300px;">17,504</span>
<svg class="b" style="left:127.30px;top:82.84px;" width="7" height="7" viewBox="0 0 7 7"><rect x="0.75" y="2.35" width="4.5" height="4.1" rx="0.9" fill="#f4f9fd" stroke="#55aae4" stroke-width="1.35"/><path d="M4.2 1.6 H6 V3.6" stroke="#dbe5f2" stroke-width="1.2" fill="none" opacity="0"/><path d="M2.5 4.9 L5.6 1.7" stroke="#3f9be0" stroke-width="1.15" fill="none"/><path d="M3.8 0.1 H6.9 V3.2 Z" fill="#2a8bd8"/></svg>
<span class="t" style="left:137.70px;top:82px;font-size:8.50px;line-height:8.50px;color:#111;transform:translateY(0.55px) rotate(0.05deg);letter-spacing:-0.300px;">341</span>
<svg class="b" style="left:215.20px;top:82.84px;" width="7" height="7" viewBox="0 0 7 7"><rect x="0.75" y="2.35" width="4.5" height="4.1" rx="0.9" fill="#f4f9fd" stroke="#55aae4" stroke-width="1.35"/><path d="M4.2 1.6 H6 V3.6" stroke="#dbe5f2" stroke-width="1.2" fill="none" opacity="0"/><path d="M2.5 4.9 L5.6 1.7" stroke="#3f9be0" stroke-width="1.15" fill="none"/><path d="M3.8 0.1 H6.9 V3.2 Z" fill="#2a8bd8"/></svg>
<span class="t" style="left:225.60px;top:82px;font-size:8.50px;line-height:8.50px;color:#111;transform:translateY(0.55px) rotate(0.05deg);">1</span>
<svg class="b" style="left:284.30px;top:82.84px;" width="7" height="7" viewBox="0 0 7 7"><rect x="0.75" y="2.35" width="4.5" height="4.1" rx="0.9" fill="#f4f9fd" stroke="#55aae4" stroke-width="1.35"/><path d="M4.2 1.6 H6 V3.6" stroke="#dbe5f2" stroke-width="1.2" fill="none" opacity="0"/><path d="M2.5 4.9 L5.6 1.7" stroke="#3f9be0" stroke-width="1.15" fill="none"/><path d="M3.8 0.1 H6.9 V3.2 Z" fill="#2a8bd8"/></svg>
<span class="t" style="left:294.80px;top:82px;font-size:8.50px;line-height:8.50px;color:#111;transform:translateY(0.55px) rotate(0.05deg);letter-spacing:-0.300px;">1,778</span>
<span class="t" style="left:360.30px;top:82px;font-size:8.50px;line-height:8.50px;color:#111;transform:translateY(0.55px) rotate(0.05deg);letter-spacing:-0.300px;">1.99</span>
<span class="t" style="left:429.20px;top:82px;font-size:8.50px;line-height:8.50px;color:#111;transform:translateY(0.55px) rotate(0.05deg);letter-spacing:0.084px;">2007-02-16 17:23:14.996</span>
<span class="t" style="left:19.10px;top:95px;font-size:8.50px;line-height:8.50px;color:#111;transform:translateY(0.09px) rotate(0.05deg);">3</span>
<span class="t" style="left:44.90px;top:95px;font-size:8.50px;line-height:8.50px;color:#111;transform:translateY(0.09px) rotate(0.05deg);letter-spacing:-0.300px;">17,505</span>
<svg class="b" style="left:127.30px;top:95.39px;" width="7" height="7" viewBox="0 0 7 7"><rect x="0.75" y="2.35" width="4.5" height="4.1" rx="0.9" fill="#f4f9fd" stroke="#55aae4" stroke-width="1.35"/><path d="M4.2 1.6 H6 V3.6" stroke="#dbe5f2" stroke-width="1.2" fill="none" opacity="0"/><path d="M2.5 4.9 L5.6 1.7" stroke="#3f9be0" stroke-width="1.15" fill="none"/><path d="M3.8 0.1 H6.9 V3.2 Z" fill="#2a8bd8"/></svg>
<span class="t" style="left:137.70px;top:95px;font-size:8.50px;line-height:8.50px;color:#111;transform:translateY(0.09px) rotate(0.05deg);letter-spacing:-0.300px;">341</span>
<svg class="b" style="left:215.20px;top:95.39px;" width="7" height="7" viewBox="0 0 7 7"><rect x="0.75" y="2.35" width="4.5" height="4.1" rx="0.9" fill="#f4f9fd" stroke="#55aae4" stroke-width="1.35"/><path d="M4.2 1.6 H6 V3.6" stroke="#dbe5f2" stroke-width="1.2" fill="none" opacity="0"/><path d="M2.5 4.9 L5.6 1.7" stroke="#3f9be0" stroke-width="1.15" fill="none"/><path d="M3.8 0.1 H6.9 V3.2 Z" fill="#2a8bd8"/></svg>
<span class="t" style="left:225.60px;top:95px;font-size:8.50px;line-height:8.50px;color:#111;transform:translateY(0.09px) rotate(0.05deg);">1</span>
<svg class="b" style="left:284.30px;top:95.39px;" width="7" height="7" viewBox="0 0 7 7"><rect x="0.75" y="2.35" width="4.5" height="4.1" rx="0.9" fill="#f4f9fd" stroke="#55aae4" stroke-width="1.35"/><path d="M4.2 1.6 H6 V3.6" stroke="#dbe5f2" stroke-width="1.2" fill="none" opacity="0"/><path d="M2.5 4.9 L5.6 1.7" stroke="#3f9be0" stroke-width="1.15" fill="none"/><path d="M3.8 0.1 H6.9 V3.2 Z" fill="#2a8bd8"/></svg>
<span class="t" style="left:294.80px;top:95px;font-size:8.50px;line-height:8.50px;color:#111;transform:translateY(0.09px) rotate(0.05deg);letter-spacing:-0.300px;">1,849</span>
<span class="t" style="left:360.30px;top:95px;font-size:8.50px;line-height:8.50px;color:#111;transform:translateY(0.09px) rotate(0.05deg);letter-spacing:-0.014px;">7.99</span>
<span class="t" style="left:429.20px;top:95px;font-size:8.50px;line-height:8.50px;color:#111;transform:translateY(0.09px) rotate(0.05deg);letter-spacing:0.143px;">2007-02-16 22:41:45.996</span>
<span class="t" style="left:19.10px;top:107px;font-size:8.50px;line-height:8.50px;color:#111;transform:translateY(0.64px) rotate(0.05deg);">4</span>
<span class="t" style="left:44.90px;top:107px;font-size:8.50px;line-height:8.50px;color:#111;transform:translateY(0.64px) rotate(0.05deg);letter-spacing:-0.300px;">17,506</span>
<svg class="b" style="left:127.30px;top:107.93px;" width="7" height="7" viewBox="0 0 7 7"><rect x="0.75" y="2.35" width="4.5" height="4.1" rx="0.9" fill="#f4f9fd" stroke="#55aae4" stroke-width="1.35"/><path d="M4.2 1.6 H6 V3.6" stroke="#dbe5f2" stroke-width="1.2" fill="none" opacity="0"/><path d="M2.5 4.9 L5.6 1.7" stroke="#3f9be0" stroke-width="1.15" fill="none"/><path d="M3.8 0.1 H6.9 V3.2 Z" fill="#2a8bd8"/></svg>
<span class="t" style="left:137.70px;top:107px;font-size:8.50px;line-height:8.50px;color:#111;transform:translateY(0.64px) rotate(0.05deg);letter-spacing:-0.300px;">341</span>
<svg class="b" style="left:215.20px;top:107.93px;" width="7" height="7" viewBox="0 0 7 7"><rect x="0.75" y="2.35" width="4.5" height="4.1" rx="0.9" fill="#f4f9fd" stroke="#55aae4" stroke-width="1.35"/><path d="M4.2 1.6 H6 V3.6" stroke="#dbe5f2" stroke-width="1.2" fill="none" opacity="0"/><path d="M2.5 4.9 L5.6 1.7" stroke="#3f9be0" stroke-width="1.15" fill="none"/><path d="M3.8 0.1 H6.9 V3.2 Z" fill="#2a8bd8"/></svg>
<span class="t" style="left:225.60px;top:107px;font-size:8.50px;line-height:8.50px;color:#111;transform:translateY(0.64px) rotate(0.05deg);">2</span>
<svg class="b" style="left:284.30px;top:107.93px;" width="7" height="7" viewBox="0 0 7 7"><rect x="0.75" y="2.35" width="4.5" height="4.1" rx="0.9" fill="#f4f9fd" stroke="#55aae4" stroke-width="1.35"/><path d="M4.2 1.6 H6 V3.6" stroke="#dbe5f2" stroke-width="1.2" fill="none" opacity="0"/><path d="M2.5 4.9 L5.6 1.7" stroke="#3f9be0" stroke-width="1.15" fill="none"/><path d="M3.8 0.1 H6.9 V3.2 Z" fill="#2a8bd8"/></svg>
<span class="t" style="left:294.80px;top:107px;font-size:8.50px;line-height:8.50px;color:#111;transform:translateY(0.64px) rotate(0.05deg);letter-spacing:-0.142px;">2,829</span>
<span class="t" style="left:360.30px;top:107px;font-size:8.50px;line-height:8.50px;color:#111;transform:translateY(0.64px) rotate(0.05deg);letter-spacing:-0.014px;">2.99</span>
<span class="t" style="left:429.20px;top:107px;font-size:8.50px;line-height:8.50px;color:#111;transform:translateY(0.64px) rotate(0.05deg);letter-spacing:0.143px;">2007-02-19 19:39:56.996</span>
<span class="t" style="left:19.10px;top:120px;font-size:8.50px;line-height:8.50px;color:#111;transform:translateY(0.18px) rotate(0.05deg);">5</span>
<span class="t" style="left:44.90px;top:120px;font-size:8.50px;line-height:8.50px;color:#111;transform:translateY(0.18px) rotate(0.05deg);letter-spacing:-0.300px;">17,507</span>
<svg class="b" style="left:127.30px;top:120.48px;" width="7" height="7" viewBox="0 0 7 7"><rect x="0.75" y="2.35" width="4.5" height="4.1" rx="0.9" fill="#f4f9fd" stroke="#55aae4" stroke-width="1.35"/><path d="M4.2 1.6 H6 V3.6" stroke="#dbe5f2" stroke-width="1.2" fill="none" opacity="0"/><path d="M2.5 4.9 L5.6 1.7" stroke="#3f9be0" stroke-width="1.15" fill="none"/><path d="M3.8 0.1 H6.9 V3.2 Z" fill="#2a8bd8"/></svg>
<span class="t" style="left:137.70px;top:120px;font-size:8.50px;line-height:8.50px;color:#111;transform:translateY(0.18px) rotate(0.05deg);letter-spacing:-0.300px;">341</span>
<svg class="b" style="left:215.20px;top:120.48px;" width="7" height="7" viewBox="0 0 7 7"><rect x="0.75" y="2.35" width="4.5" height="4.1" rx="0.9" fill="#f4f9fd" stroke="#55aae4" stroke-width="1.35"/><path d="M4.2 1.6 H6 V3.6" stroke="#dbe5f2" stroke-width="1.2" fill="none" opacity="0"/><path d="M2.5 4.9 L5.6 1.7" stroke="#3f9be0" stroke-width="1.15" fill="none"/><path d="M3.8 0.1 H6.9 V3.2 Z" fill="#2a8bd8"/></svg>
<span class="t" style="left:225.60px;top:120px;font-size:8.50px;line-height:8.50px;color:#111;transform:translateY(0.18px) rotate(0.05deg);">2</span>
<svg class="b" style="left:284.30px;top:120.48px;" width="7" height="7" viewBox="0 0 7 7"><rect x="0.75" y="2.35" width="4.5" height="4.1" rx="0.9" fill="#f4f9fd" stroke="#55aae4" stroke-width="1.35"/><path d="M4.2 1.6 H6 V3.6" stroke="#dbe5f2" stroke-width="1.2" fill="none" opacity="0"/><path d="M2.5 4.9 L5.6 1.7" stroke="#3f9be0" stroke-width="1.15" fill="none"/><path d="M3.8 0.1 H6.9 V3.2 Z" fill="#2a8bd8"/></svg>
<span class="t" style="left:294.80px;top:120px;font-size:8.50px;line-height:8.50px;color:#111;transform:translateY(0.18px) rotate(0.05deg);letter-spacing:-0.300px;">3,130</span>
<span class="t" style="left:360.30px;top:120px;font-size:8.50px;line-height:8.50px;color:#111;transform:translateY(0.18px) rotate(0.05deg);letter-spacing:-0.014px;">7.99</span>
<span class="t" style="left:429.20px;top:120px;font-size:8.50px;line-height:8.50px;color:#111;transform:translateY(0.18px) rotate(0.05deg);letter-spacing:0.143px;">2007-02-20 17:31:48.996</span>
<span class="t" style="left:19.10px;top:132px;font-size:8.50px;line-height:8.50px;color:#111;transform:translateY(0.73px) rotate(0.05deg);">6</span>
<span class="t" style="left:44.90px;top:132px;font-size:8.50px;line-height:8.50px;color:#111;transform:translateY(0.73px) rotate(0.05deg);letter-spacing:-0.300px;">17,508</span>
<svg class="b" style="left:127.30px;top:133.03px;" width="7" height="7" viewBox="0 0 7 7"><rect x="0.75" y="2.35" width="4.5" height="4.1" rx="0.9" fill="#f4f9fd" stroke="#55aae4" stroke-width="1.35"/><path d="M4.2 1.6 H6 V3.6" stroke="#dbe5f2" stroke-width="1.2" fill="none" opacity="0"/><path d="M2.5 4.9 L5.6 1.7" stroke="#3f9be0" stroke-width="1.15" fill="none"/><path d="M3.8 0.1 H6.9 V3.2 Z" fill="#2a8bd8"/></svg>
<span class="t" style="left:137.70px;top:132px;font-size:8.50px;line-height:8.50px;color:#111;transform:translateY(0.73px) rotate(0.05deg);letter-spacing:-0.300px;">341</span>
<svg class="b" style="left:215.20px;top:133.03px;" width="7" height="7" viewBox="0 0 7 7"><rect x="0.75" y="2.35" width="4.5" height="4.1" rx="0.9" fill="#f4f9fd" stroke="#55aae4" stroke-width="1.35"/><path d="M4.2 1.6 H6 V3.6" stroke="#dbe5f2" stroke-width="1.2" fill="none" opacity="0"/><path d="M2.5 4.9 L5.6 1.7" stroke="#3f9be0" stroke-width="1.15" fill="none"/><path d="M3.8 0.1 H6.9 V3.2 Z" fill="#2a8bd8"/></svg>
<span class="t" style="left:225.60px;top:132px;font-size:8.50px;line-height:8.50px;color:#111;transform:translateY(0.73px) rotate(0.05deg);">1</span>
<svg class="b" style="left:284.30px;top:133.03px;" width="7" height="7" viewBox="0 0 7 7"><rect x="0.75" y="2.35" width="4.5" height="4.1" rx="0.9" fill="#f4f9fd" stroke="#55aae4" stroke-width="1.35"/><path d="M4.2 1.6 H6 V3.6" stroke="#dbe5f2" stroke-width="1.2" fill="none" opacity="0"/><path d="M2.5 4.9 L5.6 1.7" stroke="#3f9be0" stroke-width="1.15" fill="none"/><path d="M3.8 0.1 H6.9 V3.2 Z" fill="#2a8bd8"/></svg>
<span class="t" style="left:294.80px;top:132px;font-size:8.50px;line-height:8.50px;color:#111;transform:translateY(0.73px) rotate(0.05deg);letter-spacing:-0.142px;">3,382</span>
<span class="t" style="left:360.30px;top:132px;font-size:8.50px;line-height:8.50px;color:#111;transform:translateY(0.73px) rotate(0.05deg);letter-spacing:-0.014px;">5.99</span>
<span class="t" style="left:429.20px;top:132px;font-size:8.50px;line-height:8.50px;color:#111;transform:translateY(0.73px) rotate(0.05deg);letter-spacing:0.143px;">2007-02-21 12:33:49.996</span>
<span class="t" style="left:19.10px;top:145px;font-size:8.50px;line-height:8.50px;color:#111;transform:translateY(0.27px) rotate(0.05deg);">7</span>
<span class="t" style="left:44.90px;top:145px;font-size:8.50px;line-height:8.50px;color:#111;transform:translateY(0.27px) rotate(0.05deg);letter-spacing:-0.300px;">17,509</span>
<svg class="b" style="left:127.30px;top:145.57px;" width="7" height="7" viewBox="0 0 7 7"><rect x="0.75" y="2.35" width="4.5" height="4.1" rx="0.9" fill="#f4f9fd" stroke="#55aae4" stroke-width="1.35"/><path d="M4.2 1.6 H6 V3.6" stroke="#dbe5f2" stroke-width="1.2" fill="none" opacity="0"/><path d="M2.5 4.9 L5.6 1.7" stroke="#3f9be0" stroke-width="1.15" fill="none"/><path d="M3.8 0.1 H6.9 V3.2 Z" fill="#2a8bd8"/></svg>
<span class="t" style="left:137.70px;top:145px;font-size:8.50px;line-height:8.50px;color:#111;transform:translateY(0.27px) rotate(0.05deg);letter-spacing:-0.115px;">342</span>
<svg class="b" style="left:215.20px;top:145.57px;" width="7" height="7" viewBox="0 0 7 7"><rect x="0.75" y="2.35" width="4.5" height="4.1" rx="0.9" fill="#f4f9fd" stroke="#55aae4" stroke-width="1.35"/><path d="M4.2 1.6 H6 V3.6" stroke="#dbe5f2" stroke-width="1.2" fill="none" opacity="0"/><path d="M2.5 4.9 L5.6 1.7" stroke="#3f9be0" stroke-width="1.15" fill="none"/><path d="M3.8 0.1 H6.9 V3.2 Z" fill="#2a8bd8"/></svg>
<span class="t" style="left:225.60px;top:145px;font-size:8.50px;line-height:8.50px;color:#111;transform:translateY(0.27px) rotate(0.05deg);">2</span>
<svg class="b" style="left:284.30px;top:145.57px;" width="7" height="7" viewBox="0 0 7 7"><rect x="0.75" y="2.35" width="4.5" height="4.1" rx="0.9" fill="#f4f9fd" stroke="#55aae4" stroke-width="1.35"/><path d="M4.2 1.6 H6 V3.6" stroke="#dbe5f2" stroke-width="1.2" fill="none" opacity="0"/><path d="M2.5 4.9 L5.6 1.7" stroke="#3f9be0" stroke-width="1.15" fill="none"/><path d="M3.8 0.1 H6.9 V3.2 Z" fill="#2a8bd8"/></svg>
<span class="t" style="left:294.80px;top:145px;font-size:8.50px;line-height:8.50px;color:#111;transform:translateY(0.27px) rotate(0.05deg);letter-spacing:-0.300px;">2,190</span>
<span class="t" style="left:360.30px;top:145px;font-size:8.50px;line-height:8.50px;color:#111;transform:translateY(0.27px) rotate(0.05deg);letter-spacing:-0.014px;">5.99</span>
<span class="t" style="left:429.20px;top:145px;font-size:8.50px;line-height:8.50px;color:#111;transform:translateY(0.27px) rotate(0.05deg);letter-spacing:0.143px;">2007-02-17 23:58:17.996</span>
<span class="t" style="left:19.10px;top:157px;font-size:8.50px;line-height:8.50px;color:#111;transform:translateY(0.82px) rotate(0.05deg);">8</span>
<span class="t" style="left:44.90px;top:157px;font-size:8.50px;line-height:8.50px;color:#111;transform:translateY(0.82px) rotate(0.05deg);letter-spacing:-0.300px;">17,511</span>
<svg class="b" style="left:127.30px;top:158.12px;" width="7" height="7" viewBox="0 0 7 7"><rect x="0.75" y="2.35" width="4.5" height="4.1" rx="0.9" fill="#f4f9fd" stroke="#55aae4" stroke-width="1.35"/><path d="M4.2 1.6 H6 V3.6" stroke="#dbe5f2" stroke-width="1.2" fill="none" opacity="0"/><path d="M2.5 4.9 L5.6 1.7" stroke="#3f9be0" stroke-width="1.15" fill="none"/><path d="M3.8 0.1 H6.9 V3.2 Z" fill="#2a8bd8"/></svg>
<span class="t" style="left:137.70px;top:157px;font-size:8.50px;line-height:8.50px;color:#111;transform:translateY(0.82px) rotate(0.05deg);letter-spacing:-0.115px;">342</span>
<svg class="b" style="left:215.20px;top:158.12px;" width="7" height="7" viewBox="0 0 7 7"><rect x="0.75" y="2.35" width="4.5" height="4.1" rx="0.9" fill="#f4f9fd" stroke="#55aae4" stroke-width="1.35"/><path d="M4.2 1.6 H6 V3.6" stroke="#dbe5f2" stroke-width="1.2" fill="none" opacity="0"/><path d="M2.5 4.9 L5.6 1.7" stroke="#3f9be0" stroke-width="1.15" fill="none"/><path d="M3.8 0.1 H6.9 V3.2 Z" fill="#2a8bd8"/></svg>
<span class="t" style="left:225.60px;top:157px;font-size:8.50px;line-height:8.50px;color:#111;transform:translateY(0.82px) rotate(0.05deg);">1</span>
<svg class="b" style="left:284.30px;top:158.12px;" width="7" height="7" viewBox="0 0 7 7"><rect x="0.75" y="2.35" width="4.5" height="4.1" rx="0.9" fill="#f4f9fd" stroke="#55aae4" stroke-width="1.35"/><path d="M4.2 1.6 H6 V3.6" stroke="#dbe5f2" stroke-width="1.2" fill="none" opacity="0"/><path d="M2.5 4.9 L5.6 1.7" stroke="#3f9be0" stroke-width="1.15" fill="none"/><path d="M3.8 0.1 H6.9 V3.2 Z" fill="#2a8bd8"/></svg>
<span class="t" style="left:294.80px;top:157px;font-size:8.50px;line-height:8.50px;color:#111;transform:translateY(0.82px) rotate(0.05deg);letter-spacing:-0.300px;">3,081</span>
<span class="t" style="left:360.30px;top:157px;font-size:8.50px;line-height:8.50px;color:#111;transform:translateY(0.82px) rotate(0.05deg);letter-spacing:-0.014px;">2.99</span>
<span class="t" style="left:429.20px;top:157px;font-size:8.50px;line-height:8.50px;color:#111;transform:translateY(0.82px) rotate(0.05deg);letter-spacing:0.202px;">2007-02-20 13:57:39.996</span>
<span class="t" style="left:19.10px;top:170px;font-size:8.50px;line-height:8.50px;color:#111;transform:translateY(0.36px) rotate(0.05deg);">9</span>
<span class="t" style="left:44.90px;top:170px;font-size:8.50px;line-height:8.50px;color:#111;transform:translateY(0.36px) rotate(0.05deg);letter-spacing:-0.300px;">17,512</span>
<svg class="b" style="left:127.30px;top:170.66px;" width="7" height="7" viewBox="0 0 7 7"><rect x="0.75" y="2.35" width="4.5" height="4.1" rx="0.9" fill="#f4f9fd" stroke="#55aae4" stroke-width="1.35"/><path d="M4.2 1.6 H6 V3.6" stroke="#dbe5f2" stroke-width="1.2" fill="none" opacity="0"/><path d="M2.5 4.9 L5.6 1.7" stroke="#3f9be0" stroke-width="1.15" fill="none"/><path d="M3.8 0.1 H6.9 V3.2 Z" fill="#2a8bd8"/></svg>
<span class="t" style="left:137.70px;top:170px;font-size:8.50px;line-height:8.50px;color:#111;transform:translateY(0.36px) rotate(0.05deg);letter-spacing:-0.115px;">343</span>
<svg class="b" style="left:215.20px;top:170.66px;" width="7" height="7" viewBox="0 0 7 7"><rect x="0.75" y="2.35" width="4.5" height="4.1" rx="0.9" fill="#f4f9fd" stroke="#55aae4" stroke-width="1.35"/><path d="M4.2 1.6 H6 V3.6" stroke="#dbe5f2" stroke-width="1.2" fill="none" opacity="0"/><path d="M2.5 4.9 L5.6 1.7" stroke="#3f9be0" stroke-width="1.15" fill="none"/><path d="M3.8 0.1 H6.9 V3.2 Z" fill="#2a8bd8"/></svg>
<span class="t" style="left:225.60px;top:170px;font-size:8.50px;line-height:8.50px;color:#111;transform:translateY(0.36px) rotate(0.05deg);">2</span>
<svg class="b" style="left:284.30px;top:170.66px;" width="7" height="7" viewBox="0 0 7 7"><rect x="0.75" y="2.35" width="4.5" height="4.1" rx="0.9" fill="#f4f9fd" stroke="#55aae4" stroke-width="1.35"/><path d="M4.2 1.6 H6 V3.6" stroke="#dbe5f2" stroke-width="1.2" fill="none" opacity="0"/><path d="M2.5 4.9 L5.6 1.7" stroke="#3f9be0" stroke-width="1.15" fill="none"/><path d="M3.8 0.1 H6.9 V3.2 Z" fill="#2a8bd8"/></svg>
<span class="t" style="left:294.80px;top:170px;font-size:8.50px;line-height:8.50px;color:#111;transform:translateY(0.36px) rotate(0.05deg);letter-spacing:-0.300px;">1,547</span>
<span class="t" style="left:360.30px;top:170px;font-size:8.50px;line-height:8.50px;color:#111;transform:translateY(0.36px) rotate(0.05deg);letter-spacing:-0.014px;">4.99</span>
<span class="t" style="left:429.20px;top:170px;font-size:8.50px;line-height:8.50px;color:#111;transform:translateY(0.36px) rotate(0.05deg);letter-spacing:0.143px;">2007-02-16 00:10:50.996</span>
<span class="t" style="left:19.10px;top:182px;font-size:8.50px;line-height:8.50px;color:#111;transform:translateY(0.91px) rotate(0.05deg);letter-spacing:-0.300px;">10</span>
<span class="t" style="left:44.90px;top:182px;font-size:8.50px;line-height:8.50px;color:#111;transform:translateY(0.91px) rotate(0.05deg);letter-spacing:-0.300px;">17,513</span>
<svg class="b" style="left:127.30px;top:183.21px;" width="7" height="7" viewBox="0 0 7 7"><rect x="0.75" y="2.35" width="4.5" height="4.1" rx="0.9" fill="#f4f9fd" stroke="#55aae4" stroke-width="1.35"/><path d="M4.2 1.6 H6 V3.6" stroke="#dbe5f2" stroke-width="1.2" fill="none" opacity="0"/><path d="M2.5 4.9 L5.6 1.7" stroke="#3f9be0" stroke-width="1.15" fill="none"/><path d="M3.8 0.1 H6.9 V3.2 Z" fill="#2a8bd8"/></svg>
<span class="t" style="left:137.70px;top:182px;font-size:8.50px;line-height:8.50px;color:#111;transform:translateY(0.91px) rotate(0.05deg);letter-spacing:-0.115px;">343</span>
<svg class="b" style="left:215.20px;top:183.21px;" width="7" height="7" viewBox="0 0 7 7"><rect x="0.75" y="2.35" width="4.5" height="4.1" rx="0.9" fill="#f4f9fd" stroke="#55aae4" stroke-width="1.35"/><path d="M4.2 1.6 H6 V3.6" stroke="#dbe5f2" stroke-width="1.2" fill="none" opacity="0"/><path d="M2.5 4.9 L5.6 1.7" stroke="#3f9be0" stroke-width="1.15" fill="none"/><path d="M3.8 0.1 H6.9 V3.2 Z" fill="#2a8bd8"/></svg>
<span class="t" style="left:225.60px;top:182px;font-size:8.50px;line-height:8.50px;color:#111;transform:translateY(0.91px) rotate(0.05deg);">1</span>
<svg class="b" style="left:284.30px;top:183.21px;" width="7" height="7" viewBox="0 0 7 7"><rect x="0.75" y="2.35" width="4.5" height="4.1" rx="0.9" fill="#f4f9fd" stroke="#55aae4" stroke-width="1.35"/><path d="M4.2 1.6 H6 V3.6" stroke="#dbe5f2" stroke-width="1.2" fill="none" opacity="0"/><path d="M2.5 4.9 L5.6 1.7" stroke="#3f9be0" stroke-width="1.15" fill="none"/><path d="M3.8 0.1 H6.9 V3.2 Z" fill="#2a8bd8"/></svg>
<span class="t" style="left:294.80px;top:182px;font-size:8.50px;line-height:8.50px;color:#111;transform:translateY(0.91px) rotate(0.05deg);letter-spacing:-0.300px;">1,564</span>
<span class="t" style="left:360.30px;top:182px;font-size:8.50px;line-height:8.50px;color:#111;transform:translateY(0.91px) rotate(0.05deg);letter-spacing:-0.014px;">6.99</span>
<span class="t" style="left:429.20px;top:182px;font-size:8.50px;line-height:8.50px;color:#111;transform:translateY(0.91px) rotate(0.05deg);letter-spacing:0.084px;">2007-02-16 01:15:33.996</span>
<span class="t" style="left:19.10px;top:195px;font-size:8.50px;line-height:8.50px;color:#111;transform:translateY(0.45px) rotate(0.05deg);letter-spacing:-0.300px;">11</span>
<span class="t" style="left:44.90px;top:195px;font-size:8.50px;line-height:8.50px;color:#111;transform:translateY(0.45px) rotate(0.05deg);letter-spacing:-0.300px;">17,514</span>
<svg class="b" style="left:127.30px;top:195.75px;" width="7" height="7" viewBox="0 0 7 7"><rect x="0.75" y="2.35" width="4.5" height="4.1" rx="0.9" fill="#f4f9fd" stroke="#55aae4" stroke-width="1.35"/><path d="M4.2 1.6 H6 V3.6" stroke="#dbe5f2" stroke-width="1.2" fill="none" opacity="0"/><path d="M2.5 4.9 L5.6 1.7" stroke="#3f9be0" stroke-width="1.15" fill="none"/><path d="M3.8 0.1 H6.9 V3.2 Z" fill="#2a8bd8"/></svg>
<span class="t" style="left:137.70px;top:195px;font-size:8.50px;line-height:8.50px;color:#111;transform:translateY(0.45px) rotate(0.05deg);letter-spacing:-0.115px;">343</span>
<svg class="b" style="left:215.20px;top:195.75px;" width="7" height="7" viewBox="0 0 7 7"><rect x="0.75" y="2.35" width="4.5" height="4.1" rx="0.9" fill="#f4f9fd" stroke="#55aae4" stroke-width="1.35"/><path d="M4.2 1.6 H6 V3.6" stroke="#dbe5f2" stroke-width="1.2" fill="none" opacity="0"/><path d="M2.5 4.9 L5.6 1.7" stroke="#3f9be0" stroke-width="1.15" fill="none"/><path d="M3.8 0.1 H6.9 V3.2 Z" fill="#2a8bd8"/></svg>
<span class="t" style="left:225.60px;top:195px;font-size:8.50px;line-height:8.50px;color:#111;transform:translateY(0.45px) rotate(0.05deg);">2</span>
<svg class="b" style="left:284.30px;top:195.75px;" width="7" height="7" viewBox="0 0 7 7"><rect x="0.75" y="2.35" width="4.5" height="4.1" rx="0.9" fill="#f4f9fd" stroke="#55aae4" stroke-width="1.35"/><path d="M4.2 1.6 H6 V3.6" stroke="#dbe5f2" stroke-width="1.2" fill="none" opacity="0"/><path d="M2.5 4.9 L5.6 1.7" stroke="#3f9be0" stroke-width="1.15" fill="none"/><path d="M3.8 0.1 H6.9 V3.2 Z" fill="#2a8bd8"/></svg>
<span class="t" style="left:294.80px;top:195px;font-size:8.50px;line-height:8.50px;color:#111;transform:translateY(0.45px) rotate(0.05deg);letter-spacing:-0.300px;">1,879</span>
<span class="t" style="left:360.30px;top:195px;font-size:8.50px;line-height:8.50px;color:#111;transform:translateY(0.45px) rotate(0.05deg);letter-spacing:-0.014px;">0.99</span>
<span class="t" style="left:429.20px;top:195px;font-size:8.50px;line-height:8.50px;color:#111;transform:translateY(0.45px) rotate(0.05deg);letter-spacing:0.143px;">2007-02-17 01:26:00.996</span>
<span class="t" style="left:19.10px;top:207px;font-size:8.50px;line-height:8.50px;color:#111;transform:translateY(1.00px) rotate(0.05deg);letter-spacing:-0.300px;">12</span>
<span class="t" style="left:44.90px;top:207px;font-size:8.50px;line-height:8.50px;color:#111;transform:translateY(1.00px) rotate(0.05deg);letter-spacing:-0.300px;">17,515</span>
<svg class="b" style="left:127.30px;top:208.30px;" width="7" height="7" viewBox="0 0 7 7"><rect x="0.75" y="2.35" width="4.5" height="4.1" rx="0.9" fill="#f4f9fd" stroke="#55aae4" stroke-width="1.35"/><path d="M4.2 1.6 H6 V3.6" stroke="#dbe5f2" stroke-width="1.2" fill="none" opacity="0"/><path d="M2.5 4.9 L5.6 1.7" stroke="#3f9be0" stroke-width="1.15" fill="none"/><path d="M3.8 0.1 H6.9 V3.2 Z" fill="#2a8bd8"/></svg>
<span class="t" style="left:137.70px;top:207px;font-size:8.50px;line-height:8.50px;color:#111;transform:translateY(1.00px) rotate(0.05deg);letter-spacing:-0.115px;">343</span>
<svg class="b" style="left:215.20px;top:208.30px;" width="7" height="7" viewBox="0 0 7 7"><rect x="0.75" y="2.35" width="4.5" height="4.1" rx="0.9" fill="#f4f9fd" stroke="#55aae4" stroke-width="1.35"/><path d="M4.2 1.6 H6 V3.6" stroke="#dbe5f2" stroke-width="1.2" fill="none" opacity="0"/><path d="M2.5 4.9 L5.6 1.7" stroke="#3f9be0" stroke-width="1.15" fill="none"/><path d="M3.8 0.1 H6.9 V3.2 Z" fill="#2a8bd8"/></svg>
<span class="t" style="left:225.60px;top:207px;font-size:8.50px;line-height:8.50px;color:#111;transform:translateY(1.00px) rotate(0.05deg);">2</span>
<svg class="b" style="left:284.30px;top:208.30px;" width="7" height="7" viewBox="0 0 7 7"><rect x="0.75" y="2.35" width="4.5" height="4.1" rx="0.9" fill="#f4f9fd" stroke="#55aae4" stroke-width="1.35"/><path d="M4.2 1.6 H6 V3.6" stroke="#dbe5f2" stroke-width="1.2" fill="none" opacity="0"/><path d="M2.5 4.9 L5.6 1.7" stroke="#3f9be0" stroke-width="1.15" fill="none"/><path d="M3.8 0.1 H6.9 V3.2 Z" fill="#2a8bd8"/></svg>
<span class="t" style="left:294.80px;top:207px;font-size:8.50px;line-height:8.50px;color:#111;transform:translateY(1.00px) rotate(0.05deg);letter-spacing:-0.300px;">1,922</span>
<span class="t" style="left:360.30px;top:207px;font-size:8.50px;line-height:8.50px;color:#111;transform:translateY(1.00px) rotate(0.05deg);letter-spacing:-0.014px;">0.99</span>
<span class="t" style="left:429.20px;top:207px;font-size:8.50px;line-height:8.50px;color:#111;transform:translateY(1.00px) rotate(0.05deg);letter-spacing:0.143px;">2007-02-17 04:32:51.996</span>
<span class="t" style="left:19.10px;top:220px;font-size:8.50px;line-height:8.50px;color:#111;transform:translateY(0.54px) rotate(0.05deg);letter-spacing:-0.300px;">13</span>
<span class="t" style="left:44.90px;top:220px;font-size:8.50px;line-height:8.50px;color:#111;transform:translateY(0.54px) rotate(0.05deg);letter-spacing:-0.300px;">17,516</span>
<svg class="b" style="left:127.30px;top:220.84px;" width="7" height="7" viewBox="0 0 7 7"><rect x="0.75" y="2.35" width="4.5" height="4.1" rx="0.9" fill="#f4f9fd" stroke="#55aae4" stroke-width="1.35"/><path d="M4.2 1.6 H6 V3.6" stroke="#dbe5f2" stroke-width="1.2" fill="none" opacity="0"/><path d="M2.5 4.9 L5.6 1.7" stroke="#3f9be0" stroke-width="1.15" fill="none"/><path d="M3.8 0.1 H6.9 V3.2 Z" fill="#2a8bd8"/></svg>
<span class="t" style="left:137.70px;top:220px;font-size:8.50px;line-height:8.50px;color:#111;transform:translateY(0.54px) rotate(0.05deg);letter-spacing:-0.115px;">343</span>
<svg class="b" style="left:215.20px;top:220.84px;" width="7" height="7" viewBox="0 0 7 7"><rect x="0.75" y="2.35" width="4.5" height="4.1" rx="0.9" fill="#f4f9fd" stroke="#55aae4" stroke-width="1.35"/><path d="M4.2 1.6 H6 V3.6" stroke="#dbe5f2" stroke-width="1.2" fill="none" opacity="0"/><path d="M2.5 4.9 L5.6 1.7" stroke="#3f9be0" stroke-width="1.15" fill="none"/><path d="M3.8 0.1 H6.9 V3.2 Z" fill="#2a8bd8"/></svg>
<span class="t" style="left:225.60px;top:220px;font-size:8.50px;line-height:8.50px;color:#111;transform:translateY(0.54px) rotate(0.05deg);">2</span>
<svg class="b" style="left:284.30px;top:220.84px;" width="7" height="7" viewBox="0 0 7 7"><rect x="0.75" y="2.35" width="4.5" height="4.1" rx="0.9" fill="#f4f9fd" stroke="#55aae4" stroke-width="1.35"/><path d="M4.2 1.6 H6 V3.6" stroke="#dbe5f2" stroke-width="1.2" fill="none" opacity="0"/><path d="M2.5 4.9 L5.6 1.7" stroke="#3f9be0" stroke-width="1.15" fill="none"/><path d="M3.8 0.1 H6.9 V3.2 Z" fill="#2a8bd8"/></svg>
<span class="t" style="left:294.80px;top:220px;font-size:8.50px;line-height:8.50px;color:#111;transform:translateY(0.54px) rotate(0.05deg);letter-spacing:-0.300px;">2,461</span>
<span class="t" style="left:360.30px;top:220px;font-size:8.50px;line-height:8.50px;color:#111;transform:translateY(0.54px) rotate(0.05deg);letter-spacing:-0.014px;">6.99</span>
<span class="t" style="left:429.20px;top:220px;font-size:8.50px;line-height:8.50px;color:#111;transform:translateY(0.54px) rotate(0.05deg);letter-spacing:0.143px;">2007-02-18 18:26:38.996</span>
<span class="t" style="left:19.10px;top:233px;font-size:8.50px;line-height:8.50px;color:#111;transform:translateY(0.09px) rotate(0.05deg);letter-spacing:-0.300px;">14</span>
<span class="t" style="left:44.90px;top:233px;font-size:8.50px;line-height:8.50px;color:#111;transform:translateY(0.09px) rotate(0.05deg);letter-spacing:-0.300px;">17,517</span>
<svg class="b" style="left:127.30px;top:233.39px;" width="7" height="7" viewBox="0 0 7 7"><rect x="0.75" y="2.35" width="4.5" height="4.1" rx="0.9" fill="#f4f9fd" stroke="#55aae4" stroke-width="1.35"/><path d="M4.2 1.6 H6 V3.6" stroke="#dbe5f2" stroke-width="1.2" fill="none" opacity="0"/><path d="M2.5 4.9 L5.6 1.7" stroke="#3f9be0" stroke-width="1.15" fill="none"/><path d="M3.8 0.1 H6.9 V3.2 Z" fill="#2a8bd8"/></svg>
<span class="t" style="left:137.70px;top:233px;font-size:8.50px;line-height:8.50px;color:#111;transform:translateY(0.09px) rotate(0.05deg);letter-spacing:-0.115px;">343</span>
<svg class="b" style="left:215.20px;top:233.39px;" width="7" height="7" viewBox="0 0 7 7"><rect x="0.75" y="2.35" width="4.5" height="4.1" rx="0.9" fill="#f4f9fd" stroke="#55aae4" stroke-width="1.35"/><path d="M4.2 1.6 H6 V3.6" stroke="#dbe5f2" stroke-width="1.2" fill="none" opacity="0"/><path d="M2.5 4.9 L5.6 1.7" stroke="#3f9be0" stroke-width="1.15" fill="none"/><path d="M3.8 0.1 H6.9 V3.2 Z" fill="#2a8bd8"/></svg>
<span class="t" style="left:225.60px;top:233px;font-size:8.50px;line-height:8.50px;color:#111;transform:translateY(0.09px) rotate(0.05deg);">1</span>
<svg class="b" style="left:284.30px;top:233.39px;" width="7" height="7" viewBox="0 0 7 7"><rect x="0.75" y="2.35" width="4.5" height="4.1" rx="0.9" fill="#f4f9fd" stroke="#55aae4" stroke-width="1.35"/><path d="M4.2 1.6 H6 V3.6" stroke="#dbe5f2" stroke-width="1.2" fill="none" opacity="0"/><path d="M2.5 4.9 L5.6 1.7" stroke="#3f9be0" stroke-width="1.15" fill="none"/><path d="M3.8 0.1 H6.9 V3.2 Z" fill="#2a8bd8"/></svg>
<span class="t" style="left:294.80px;top:233px;font-size:8.50px;line-height:8.50px;color:#111;transform:translateY(0.09px) rotate(0.05deg);letter-spacing:-0.142px;">2,980</span>
<span class="t" style="left:360.30px;top:233px;font-size:8.50px;line-height:8.50px;color:#111;transform:translateY(0.09px) rotate(0.05deg);letter-spacing:-0.014px;">8.99</span>
<span class="t" style="left:429.20px;top:233px;font-size:8.50px;line-height:8.50px;color:#111;transform:translateY(0.09px) rotate(0.05deg);letter-spacing:0.261px;">2007-02-20 07:03:29.996</span>
<span class="t" style="left:19.10px;top:245px;font-size:8.50px;line-height:8.50px;color:#111;transform:translateY(0.63px) rotate(0.05deg);letter-spacing:-0.300px;">15</span>
<span class="t" style="left:44.90px;top:245px;font-size:8.50px;line-height:8.50px;color:#111;transform:translateY(0.63px) rotate(0.05deg);letter-spacing:-0.300px;">17,518</span>
<svg class="b" style="left:127.30px;top:245.93px;" width="7" height="7" viewBox="0 0 7 7"><rect x="0.75" y="2.35" width="4.5" height="4.1" rx="0.9" fill="#f4f9fd" stroke="#55aae4" stroke-width="1.35"/><path d="M4.2 1.6 H6 V3.6" stroke="#dbe5f2" stroke-width="1.2" fill="none" opacity="0"/><path d="M2.5 4.9 L5.6 1.7" stroke="#3f9be0" stroke-width="1.15" fill="none"/><path d="M3.8 0.1 H6.9 V3.2 Z" fill="#2a8bd8"/></svg>
<span class="t" style="left:137.70px;top:245px;font-size:8.50px;line-height:8.50px;color:#111;transform:translateY(0.63px) rotate(0.05deg);letter-spacing:-0.115px;">343</span>
<svg class="b" style="left:215.20px;top:245.93px;" width="7" height="7" viewBox="0 0 7 7"><rect x="0.75" y="2.35" width="4.5" height="4.1" rx="0.9" fill="#f4f9fd" stroke="#55aae4" stroke-width="1.35"/><path d="M4.2 1.6 H6 V3.6" stroke="#dbe5f2" stroke-width="1.2" fill="none" opacity="0"/><path d="M2.5 4.9 L5.6 1.7" stroke="#3f9be0" stroke-width="1.15" fill="none"/><path d="M3.8 0.1 H6.9 V3.2 Z" fill="#2a8bd8"/></svg>
<span class="t" style="left:225.60px;top:245px;font-size:8.50px;line-height:8.50px;color:#111;transform:translateY(0.63px) rotate(0.05deg);">1</span>
<svg class="b" style="left:284.30px;top:245.93px;" width="7" height="7" viewBox="0 0 7 7"><rect x="0.75" y="2.35" width="4.5" height="4.1" rx="0.9" fill="#f4f9fd" stroke="#55aae4" stroke-width="1.35"/><path d="M4.2 1.6 H6 V3.6" stroke="#dbe5f2" stroke-width="1.2" fill="none" opacity="0"/><path d="M2.5 4.9 L5.6 1.7" stroke="#3f9be0" stroke-width="1.15" fill="none"/><path d="M3.8 0.1 H6.9 V3.2 Z" fill="#2a8bd8"/></svg>
<span class="t" style="left:294.80px;top:245px;font-size:8.50px;line-height:8.50px;color:#111;transform:translateY(0.63px) rotate(0.05deg);letter-spacing:-0.142px;">3,407</span>
<span class="t" style="left:360.30px;top:245px;font-size:8.50px;line-height:8.50px;color:#111;transform:translateY(0.63px) rotate(0.05deg);letter-spacing:-0.014px;">0.99</span>
<span class="t" style="left:429.20px;top:245px;font-size:8.50px;line-height:8.50px;color:#111;transform:translateY(0.63px) rotate(0.05deg);letter-spacing:0.143px;">2007-02-21 14:42:28.996</span>
<span class="t" style="left:19.10px;top:258px;font-size:8.50px;line-height:8.50px;color:#111;transform:translateY(0.18px) rotate(0.05deg);letter-spacing:-0.300px;">16</span>
<span class="t" style="left:44.90px;top:258px;font-size:8.50px;line-height:8.50px;color:#111;transform:translateY(0.18px) rotate(0.05deg);letter-spacing:-0.300px;">17,519</span>
<svg class="b" style="left:127.30px;top:258.48px;" width="7" height="7" viewBox="0 0 7 7"><rect x="0.75" y="2.35" width="4.5" height="4.1" rx="0.9" fill="#f4f9fd" stroke="#55aae4" stroke-width="1.35"/><path d="M4.2 1.6 H6 V3.6" stroke="#dbe5f2" stroke-width="1.2" fill="none" opacity="0"/><path d="M2.5 4.9 L5.6 1.7" stroke="#3f9be0" stroke-width="1.15" fill="none"/><path d="M3.8 0.1 H6.9 V3.2 Z" fill="#2a8bd8"/></svg>
<span class="t" style="left:137.70px;top:258px;font-size:8.50px;line-height:8.50px;color:#111;transform:translateY(0.18px) rotate(0.05deg);letter-spacing:-0.115px;">344</span>
<svg class="b" style="left:215.20px;top:258.48px;" width="7" height="7" viewBox="0 0 7 7"><rect x="0.75" y="2.35" width="4.5" height="4.1" rx="0.9" fill="#f4f9fd" stroke="#55aae4" stroke-width="1.35"/><path d="M4.2 1.6 H6 V3.6" stroke="#dbe5f2" stroke-width="1.2" fill="none" opacity="0"/><path d="M2.5 4.9 L5.6 1.7" stroke="#3f9be0" stroke-width="1.15" fill="none"/><path d="M3.8 0.1 H6.9 V3.2 Z" fill="#2a8bd8"/></svg>
<span class="t" style="left:225.60px;top:258px;font-size:8.50px;line-height:8.50px;color:#111;transform:translateY(0.18px) rotate(0.05deg);">1</span>
<svg class="b" style="left:284.30px;top:258.48px;" width="7" height="7" viewBox="0 0 7 7"><rect x="0.75" y="2.35" width="4.5" height="4.1" rx="0.9" fill="#f4f9fd" stroke="#55aae4" stroke-width="1.35"/><path d="M4.2 1.6 H6 V3.6" stroke="#dbe5f2" stroke-width="1.2" fill="none" opacity="0"/><path d="M2.5 4.9 L5.6 1.7" stroke="#3f9be0" stroke-width="1.15" fill="none"/><path d="M3.8 0.1 H6.9 V3.2 Z" fill="#2a8bd8"/></svg>
<span class="t" style="left:294.80px;top:258px;font-size:8.50px;line-height:8.50px;color:#111;transform:translateY(0.18px) rotate(0.05deg);letter-spacing:-0.300px;">1,341</span>
<span class="t" style="left:360.30px;top:258px;font-size:8.50px;line-height:8.50px;color:#111;transform:translateY(0.18px) rotate(0.05deg);letter-spacing:-0.014px;">3.99</span>
<span class="t" style="left:429.20px;top:258px;font-size:8.50px;line-height:8.50px;color:#111;transform:translateY(0.18px) rotate(0.05deg);letter-spacing:0.143px;">2007-02-15 10:54:44.996</span>
<span class="t" style="left:19.10px;top:270px;font-size:8.50px;line-height:8.50px;color:#111;transform:translateY(0.72px) rotate(0.05deg);letter-spacing:-0.300px;">17</span>
<span class="t" style="left:44.90px;top:270px;font-size:8.50px;line-height:8.50px;color:#111;transform:translateY(0.72px) rotate(0.05deg);letter-spacing:-0.300px;">17,520</span>
<svg class="b" style="left:127.30px;top:271.02px;" width="7" height="7" viewBox="0 0 7 7"><rect x="0.75" y="2.35" width="4.5" height="4.1" rx="0.9" fill="#f4f9fd" stroke="#55aae4" stroke-width="1.35"/><path d="M4.2 1.6 H6 V3.6" stroke="#dbe5f2" stroke-width="1.2" fill="none" opacity="0"/><path d="M2.5 4.9 L5.6 1.7" stroke="#3f9be0" stroke-width="1.15" fill="none"/><path d="M3.8 0.1 H6.9 V3.2 Z" fill="#2a8bd8"/></svg>
<span class="t" style="left:137.70px;top:270px;font-size:8.50px;line-height:8.50px;color:#111;transform:translateY(0.72px) rotate(0.05deg);letter-spacing:-0.115px;">344</span>
<svg class="b" style="left:215.20px;top:271.02px;" width="7" height="7" viewBox="0 0 7 7"><rect x="0.75" y="2.35" width="4.5" height="4.1" rx="0.9" fill="#f4f9fd" stroke="#55aae4" stroke-width="1.35"/><path d="M4.2 1.6 H6 V3.6" stroke="#dbe5f2" stroke-width="1.2" fill="none" opacity="0"/><path d="M2.5 4.9 L5.6 1.7" stroke="#3f9be0" stroke-width="1.15" fill="none"/><path d="M3.8 0.1 H6.9 V3.2 Z" fill="#2a8bd8"/></svg>
<span class="t" style="left:225.60px;top:270px;font-size:8.50px;line-height:8.50px;color:#111;transform:translateY(0.72px) rotate(0.05deg);">2</span>
<svg class="b" style="left:284.30px;top:271.02px;" width="7" height="7" viewBox="0 0 7 7"><rect x="0.75" y="2.35" width="4.5" height="4.1" rx="0.9" fill="#f4f9fd" stroke="#55aae4" stroke-width="1.35"/><path d="M4.2 1.6 H6 V3.6" stroke="#dbe5f2" stroke-width="1.2" fill="none" opacity="0"/><path d="M2.5 4.9 L5.6 1.7" stroke="#3f9be0" stroke-width="1.15" fill="none"/><path d="M3.8 0.1 H6.9 V3.2 Z" fill="#2a8bd8"/></svg>
<span class="t" style="left:294.80px;top:270px;font-size:8.50px;line-height:8.50px;color:#111;transform:translateY(0.72px) rotate(0.05deg);letter-spacing:-0.300px;">1,475</span>
<span class="t" style="left:360.30px;top:270px;font-size:8.50px;line-height:8.50px;color:#111;transform:translateY(0.72px) rotate(0.05deg);letter-spacing:-0.014px;">4.99</span>
<span class="t" style="left:429.20px;top:270px;font-size:8.50px;line-height:8.50px;color:#111;transform:translateY(0.72px) rotate(0.05deg);letter-spacing:0.143px;">2007-02-15 19:36:27.996</span>
<span class="t" style="left:19.10px;top:283px;font-size:8.50px;line-height:8.50px;color:#111;transform:translateY(0.27px) rotate(0.05deg);letter-spacing:-0.300px;">18</span>
<span class="t" style="left:44.90px;top:283px;font-size:8.50px;line-height:8.50px;color:#111;transform:translateY(0.27px) rotate(0.05deg);letter-spacing:-0.300px;">17,521</span>
<svg class="b" style="left:127.30px;top:283.56px;" width="7" height="7" viewBox="0 0 7 7"><rect x="0.75" y="2.35" width="4.5" height="4.1" rx="0.9" fill="#f4f9fd" stroke="#55aae4" stroke-width="1.35"/><path d="M4.2 1.6 H6 V3.6" stroke="#dbe5f2" stroke-width="1.2" fill="none" opacity="0"/><path d="M2.5 4.9 L5.6 1.7" stroke="#3f9be0" stroke-width="1.15" fill="none"/><path d="M3.8 0.1 H6.9 V3.2 Z" fill="#2a8bd8"/></svg>
<span class="t" style="left:137.70px;top:283px;font-size:8.50px;line-height:8.50px;color:#111;transform:translateY(0.27px) rotate(0.05deg);letter-spacing:-0.115px;">344</span>
<svg class="b" style="left:215.20px;top:283.56px;" width="7" height="7" viewBox="0 0 7 7"><rect x="0.75" y="2.35" width="4.5" height="4.1" rx="0.9" fill="#f4f9fd" stroke="#55aae4" stroke-width="1.35"/><path d="M4.2 1.6 H6 V3.6" stroke="#dbe5f2" stroke-width="1.2" fill="none" opacity="0"/><path d="M2.5 4.9 L5.6 1.7" stroke="#3f9be0" stroke-width="1.15" fill="none"/><path d="M3.8 0.1 H6.9 V3.2 Z" fill="#2a8bd8"/></svg>
<span class="t" style="left:225.60px;top:283px;font-size:8.50px;line-height:8.50px;color:#111;transform:translateY(0.27px) rotate(0.05deg);">1</span>
<svg class="b" style="left:284.30px;top:283.56px;" width="7" height="7" viewBox="0 0 7 7"><rect x="0.75" y="2.35" width="4.5" height="4.1" rx="0.9" fill="#f4f9fd" stroke="#55aae4" stroke-width="1.35"/><path d="M4.2 1.6 H6 V3.6" stroke="#dbe5f2" stroke-width="1.2" fill="none" opacity="0"/><path d="M2.5 4.9 L5.6 1.7" stroke="#3f9be0" stroke-width="1.15" fill="none"/><path d="M3.8 0.1 H6.9 V3.2 Z" fill="#2a8bd8"/></svg>
<span class="t" style="left:294.80px;top:283px;font-size:8.50px;line-height:8.50px;color:#111;transform:translateY(0.27px) rotate(0.05deg);letter-spacing:-0.300px;">1,731</span>
<span class="t" style="left:360.30px;top:283px;font-size:8.50px;line-height:8.50px;color:#111;transform:translateY(0.27px) rotate(0.05deg);letter-spacing:-0.014px;">0.99</span>
<span class="t" style="left:429.20px;top:283px;font-size:8.50px;line-height:8.50px;color:#111;transform:translateY(0.27px) rotate(0.05deg);letter-spacing:0.143px;">2007-02-16 14:00:38.996</span>
<span class="t" style="left:19.10px;top:295px;font-size:8.50px;line-height:8.50px;color:#111;transform:translateY(0.81px) rotate(0.05deg);letter-spacing:-0.300px;">19</span>
<span class="t" style="left:44.90px;top:295px;font-size:8.50px;line-height:8.50px;color:#111;transform:translateY(0.81px) rotate(0.05deg);letter-spacing:-0.300px;">17,522</span>
<svg class="b" style="left:127.30px;top:296.11px;" width="7" height="7" viewBox="0 0 7 7"><rect x="0.75" y="2.35" width="4.5" height="4.1" rx="0.9" fill="#f4f9fd" stroke="#55aae4" stroke-width="1.35"/><path d="M4.2 1.6 H6 V3.6" stroke="#dbe5f2" stroke-width="1.2" fill="none" opacity="0"/><path d="M2.5 4.9 L5.6 1.7" stroke="#3f9be0" stroke-width="1.15" fill="none"/><path d="M3.8 0.1 H6.9 V3.2 Z" fill="#2a8bd8"/></svg>
<span class="t" style="left:137.70px;top:295px;font-size:8.50px;line-height:8.50px;color:#111;transform:translateY(0.81px) rotate(0.05deg);letter-spacing:-0.115px;">345</span>
<svg class="b" style="left:215.20px;top:296.11px;" width="7" height="7" viewBox="0 0 7 7"><rect x="0.75" y="2.35" width="4.5" height="4.1" rx="0.9" fill="#f4f9fd" stroke="#55aae4" stroke-width="1.35"/><path d="M4.2 1.6 H6 V3.6" stroke="#dbe5f2" stroke-width="1.2" fill="none" opacity="0"/><path d="M2.5 4.9 L5.6 1.7" stroke="#3f9be0" stroke-width="1.15" fill="none"/><path d="M3.8 0.1 H6.9 V3.2 Z" fill="#2a8bd8"/></svg>
<span class="t" style="left:225.60px;top:295px;font-size:8.50px;line-height:8.50px;color:#111;transform:translateY(0.81px) rotate(0.05deg);">2</span>
<svg class="b" style="left:284.30px;top:296.11px;" width="7" height="7" viewBox="0 0 7 7"><rect x="0.75" y="2.35" width="4.5" height="4.1" rx="0.9" fill="#f4f9fd" stroke="#55aae4" stroke-width="1.35"/><path d="M4.2 1.6 H6 V3.6" stroke="#dbe5f2" stroke-width="1.2" fill="none" opacity="0"/><path d="M2.5 4.9 L5.6 1.7" stroke="#3f9be0" stroke-width="1.15" fill="none"/><path d="M3.8 0.1 H6.9 V3.2 Z" fill="#2a8bd8"/></svg>
<span class="t" style="left:294.80px;top:295px;font-size:8.50px;line-height:8.50px;color:#111;transform:translateY(0.81px) rotate(0.05deg);letter-spacing:-0.300px;">1,210</span>
<span class="t" style="left:360.30px;top:295px;font-size:8.50px;line-height:8.50px;color:#111;transform:translateY(0.81px) rotate(0.05deg);letter-spacing:-0.014px;">0.99</span>
<span class="t" style="left:429.20px;top:295px;font-size:8.50px;line-height:8.50px;color:#111;transform:translateY(0.81px) rotate(0.05deg);letter-spacing:0.084px;">2007-02-15 01:26:17.996</span>
<span class="t" style="left:19.10px;top:308px;font-size:8.50px;line-height:8.50px;color:#111;transform:translateY(0.36px) rotate(0.05deg);letter-spacing:-0.300px;">20</span>
<span class="t" style="left:44.90px;top:308px;font-size:8.50px;line-height:8.50px;color:#111;transform:translateY(0.36px) rotate(0.05deg);letter-spacing:-0.300px;">17,523</span>
<svg class="b" style="left:127.30px;top:308.66px;" width="7" height="7" viewBox="0 0 7 7"><rect x="0.75" y="2.35" width="4.5" height="4.1" rx="0.9" fill="#f4f9fd" stroke="#55aae4" stroke-width="1.35"/><path d="M4.2 1.6 H6 V3.6" stroke="#dbe5f2" stroke-width="1.2" fill="none" opacity="0"/><path d="M2.5 4.9 L5.6 1.7" stroke="#3f9be0" stroke-width="1.15" fill="none"/><path d="M3.8 0.1 H6.9 V3.2 Z" fill="#2a8bd8"/></svg>
<span class="t" style="left:137.70px;top:308px;font-size:8.50px;line-height:8.50px;color:#111;transform:translateY(0.36px) rotate(0.05deg);letter-spacing:-0.115px;">345</span>
<svg class="b" style="left:215.20px;top:308.66px;" width="7" height="7" viewBox="0 0 7 7"><rect x="0.75" y="2.35" width="4.5" height="4.1" rx="0.9" fill="#f4f9fd" stroke="#55aae4" stroke-width="1.35"/><path d="M4.2 1.6 H6 V3.6" stroke="#dbe5f2" stroke-width="1.2" fill="none" opacity="0"/><path d="M2.5 4.9 L5.6 1.7" stroke="#3f9be0" stroke-width="1.15" fill="none"/><path d="M3.8 0.1 H6.9 V3.2 Z" fill="#2a8bd8"/></svg>
<span class="t" style="left:225.60px;top:308px;font-size:8.50px;line-height:8.50px;color:#111;transform:translateY(0.36px) rotate(0.05deg);">1</span>
<svg class="b" style="left:284.30px;top:308.66px;" width="7" height="7" viewBox="0 0 7 7"><rect x="0.75" y="2.35" width="4.5" height="4.1" rx="0.9" fill="#f4f9fd" stroke="#55aae4" stroke-width="1.35"/><path d="M4.2 1.6 H6 V3.6" stroke="#dbe5f2" stroke-width="1.2" fill="none" opacity="0"/><path d="M2.5 4.9 L5.6 1.7" stroke="#3f9be0" stroke-width="1.15" fill="none"/><path d="M3.8 0.1 H6.9 V3.2 Z" fill="#2a8bd8"/></svg>
<span class="t" style="left:294.80px;top:308px;font-size:8.50px;line-height:8.50px;color:#111;transform:translateY(0.36px) rotate(0.05deg);letter-spacing:-0.300px;">1,457</span>
<span class="t" style="left:360.30px;top:308px;font-size:8.50px;line-height:8.50px;color:#111;transform:translateY(0.36px) rotate(0.05deg);letter-spacing:-0.014px;">4.99</span>
<span class="t" style="left:429.20px;top:308px;font-size:8.50px;line-height:8.50px;color:#111;transform:translateY(0.36px) rotate(0.05deg);letter-spacing:0.084px;">2007-02-15 18:34:15.996</span>
<span class="t" style="left:19.10px;top:320px;font-size:8.50px;line-height:8.50px;color:#111;transform:translateY(0.90px) rotate(0.05deg);letter-spacing:-0.300px;">21</span>
<span class="t" style="left:44.90px;top:320px;font-size:8.50px;line-height:8.50px;color:#111;transform:translateY(0.90px) rotate(0.05deg);letter-spacing:-0.300px;">17,524</span>
<svg class="b" style="left:127.30px;top:321.20px;" width="7" height="7" viewBox="0 0 7 7"><rect x="0.75" y="2.35" width="4.5" height="4.1" rx="0.9" fill="#f4f9fd" stroke="#55aae4" stroke-width="1.35"/><path d="M4.2 1.6 H6 V3.6" stroke="#dbe5f2" stroke-width="1.2" fill="none" opacity="0"/><path d="M2.5 4.9 L5.6 1.7" stroke="#3f9be0" stroke-width="1.15" fill="none"/><path d="M3.8 0.1 H6.9 V3.2 Z" fill="#2a8bd8"/></svg>
<span class="t" style="left:137.70px;top:320px;font-size:8.50px;line-height:8.50px;color:#111;transform:translateY(0.90px) rotate(0.05deg);letter-spacing:-0.115px;">345</span>
<svg class="b" style="left:215.20px;top:321.20px;" width="7" height="7" viewBox="0 0 7 7"><rect x="0.75" y="2.35" width="4.5" height="4.1" rx="0.9" fill="#f4f9fd" stroke="#55aae4" stroke-width="1.35"/><path d="M4.2 1.6 H6 V3.6" stroke="#dbe5f2" stroke-width="1.2" fill="none" opacity="0"/><path d="M2.5 4.9 L5.6 1.7" stroke="#3f9be0" stroke-width="1.15" fill="none"/><path d="M3.8 0.1 H6.9 V3.2 Z" fill="#2a8bd8"/></svg>
<span class="t" style="left:225.60px;top:320px;font-size:8.50px;line-height:8.50px;color:#111;transform:translateY(0.90px) rotate(0.05deg);">2</span>
<svg class="b" style="left:284.30px;top:321.20px;" width="7" height="7" viewBox="0 0 7 7"><rect x="0.75" y="2.35" width="4.5" height="4.1" rx="0.9" fill="#f4f9fd" stroke="#55aae4" stroke-width="1.35"/><path d="M4.2 1.6 H6 V3.6" stroke="#dbe5f2" stroke-width="1.2" fill="none" opacity="0"/><path d="M2.5 4.9 L5.6 1.7" stroke="#3f9be0" stroke-width="1.15" fill="none"/><path d="M3.8 0.1 H6.9 V3.2 Z" fill="#2a8bd8"/></svg>
<span class="t" style="left:294.80px;top:320px;font-size:8.50px;line-height:8.50px;color:#111;transform:translateY(0.90px) rotate(0.05deg);letter-spacing:-0.300px;">1,550</span>
<span class="t" style="left:360.30px;top:320px;font-size:8.50px;line-height:8.50px;color:#111;transform:translateY(0.90px) rotate(0.05deg);letter-spacing:-0.014px;">0.99</span>
<span class="t" style="left:429.20px;top:320px;font-size:8.50px;line-height:8.50px;color:#111;transform:translateY(0.90px) rotate(0.05deg);letter-spacing:0.143px;">2007-02-16 00:27:01.996</span>
<span class="t" style="left:19.10px;top:333px;font-size:8.50px;line-height:8.50px;color:#111;transform:translateY(0.45px) rotate(0.05deg);letter-spacing:-0.300px;">22</span>
<span class="t" style="left:44.90px;top:333px;font-size:8.50px;line-height:8.50px;color:#111;transform:translateY(0.45px) rotate(0.05deg);letter-spacing:-0.300px;">17,525</span>
<svg class="b" style="left:127.30px;top:333.75px;" width="7" height="7" viewBox="0 0 7 7"><rect x="0.75" y="2.35" width="4.5" height="4.1" rx="0.9" fill="#f4f9fd" stroke="#55aae4" stroke-width="1.35"/><path d="M4.2 1.6 H6 V3.6" stroke="#dbe5f2" stroke-width="1.2" fill="none" opacity="0"/><path d="M2.5 4.9 L5.6 1.7" stroke="#3f9be0" stroke-width="1.15" fill="none"/><path d="M3.8 0.1 H6.9 V3.2 Z" fill="#2a8bd8"/></svg>
<span class="t" style="left:137.70px;top:333px;font-size:8.50px;line-height:8.50px;color:#111;transform:translateY(0.45px) rotate(0.05deg);letter-spacing:-0.115px;">345</span>
<svg class="b" style="left:215.20px;top:333.75px;" width="7" height="7" viewBox="0 0 7 7"><rect x="0.75" y="2.35" width="4.5" height="4.1" rx="0.9" fill="#f4f9fd" stroke="#55aae4" stroke-width="1.35"/><path d="M4.2 1.6 H6 V3.6" stroke="#dbe5f2" stroke-width="1.2" fill="none" opacity="0"/><path d="M2.5 4.9 L5.6 1.7" stroke="#3f9be0" stroke-width="1.15" fill="none"/><path d="M3.8 0.1 H6.9 V3.2 Z" fill="#2a8bd8"/></svg>
<span class="t" style="left:225.60px;top:333px;font-size:8.50px;line-height:8.50px;color:#111;transform:translateY(0.45px) rotate(0.05deg);">2</span>
<svg class="b" style="left:284.30px;top:333.75px;" width="7" height="7" viewBox="0 0 7 7"><rect x="0.75" y="2.35" width="4.5" height="4.1" rx="0.9" fill="#f4f9fd" stroke="#55aae4" stroke-width="1.35"/><path d="M4.2 1.6 H6 V3.6" stroke="#dbe5f2" stroke-width="1.2" fill="none" opacity="0"/><path d="M2.5 4.9 L5.6 1.7" stroke="#3f9be0" stroke-width="1.15" fill="none"/><path d="M3.8 0.1 H6.9 V3.2 Z" fill="#2a8bd8"/></svg>
<span class="t" style="left:294.80px;top:333px;font-size:8.50px;line-height:8.50px;color:#111;transform:translateY(0.45px) rotate(0.05deg);letter-spacing:-0.142px;">2,766</span>
<span class="t" style="left:360.30px;top:333px;font-size:8.50px;line-height:8.50px;color:#111;transform:translateY(0.45px) rotate(0.05deg);letter-spacing:-0.014px;">4.99</span>
<span class="t" style="left:429.20px;top:333px;font-size:8.50px;line-height:8.50px;color:#111;transform:translateY(0.45px) rotate(0.05deg);letter-spacing:0.024px;">2007-02-19 16:13:41.996</span>
<span class="t" style="left:19.10px;top:345px;font-size:8.50px;line-height:8.50px;color:#111;transform:translateY(0.99px) rotate(0.05deg);letter-spacing:-0.300px;">23</span>
<span class="t" style="left:44.90px;top:345px;font-size:8.50px;line-height:8.50px;color:#111;transform:translateY(0.99px) rotate(0.05deg);letter-spacing:-0.300px;">17,526</span>
<svg class="b" style="left:127.30px;top:346.29px;" width="7" height="7" viewBox="0 0 7 7"><rect x="0.75" y="2.35" width="4.5" height="4.1" rx="0.9" fill="#f4f9fd" stroke="#55aae4" stroke-width="1.35"/><path d="M4.2 1.6 H6 V3.6" stroke="#dbe5f2" stroke-width="1.2" fill="none" opacity="0"/><path d="M2.5 4.9 L5.6 1.7" stroke="#3f9be0" stroke-width="1.15" fill="none"/><path d="M3.8 0.1 H6.9 V3.2 Z" fill="#2a8bd8"/></svg>
<span class="t" style="left:137.70px;top:345px;font-size:8.50px;line-height:8.50px;color:#111;transform:translateY(0.99px) rotate(0.05deg);letter-spacing:-0.115px;">346</span>
<svg class="b" style="left:215.20px;top:346.29px;" width="7" height="7" viewBox="0 0 7 7"><rect x="0.75" y="2.35" width="4.5" height="4.1" rx="0.9" fill="#f4f9fd" stroke="#55aae4" stroke-width="1.35"/><path d="M4.2 1.6 H6 V3.6" stroke="#dbe5f2" stroke-width="1.2" fill="none" opacity="0"/><path d="M2.5 4.9 L5.6 1.7" stroke="#3f9be0" stroke-width="1.15" fill="none"/><path d="M3.8 0.1 H6.9 V3.2 Z" fill="#2a8bd8"/></svg>
<span class="t" style="left:225.60px;top:345px;font-size:8.50px;line-height:8.50px;color:#111;transform:translateY(0.99px) rotate(0.05deg);">1</span>
<svg class="b" style="left:284.30px;top:346.29px;" width="7" height="7" viewBox="0 0 7 7"><rect x="0.75" y="2.35" width="4.5" height="4.1" rx="0.9" fill="#f4f9fd" stroke="#55aae4" stroke-width="1.35"/><path d="M4.2 1.6 H6 V3.6" stroke="#dbe5f2" stroke-width="1.2" fill="none" opacity="0"/><path d="M2.5 4.9 L5.6 1.7" stroke="#3f9be0" stroke-width="1.15" fill="none"/><path d="M3.8 0.1 H6.9 V3.2 Z" fill="#2a8bd8"/></svg>
<span class="t" style="left:294.80px;top:345px;font-size:8.50px;line-height:8.50px;color:#111;transform:translateY(0.99px) rotate(0.05deg);letter-spacing:-0.300px;">1,994</span>
<span class="t" style="left:360.30px;top:345px;font-size:8.50px;line-height:8.50px;color:#111;transform:translateY(0.99px) rotate(0.05deg);letter-spacing:-0.014px;">5.99</span>
<span class="t" style="left:429.20px;top:345px;font-size:8.50px;line-height:8.50px;color:#111;transform:translateY(0.99px) rotate(0.05deg);letter-spacing:0.202px;">2007-02-17 09:35:32.996</span>
<span class="t" style="left:19.10px;top:358px;font-size:8.50px;line-height:8.50px;color:#111;transform:translateY(0.54px) rotate(0.05deg);letter-spacing:-0.300px;">24</span>
<span class="t" style="left:44.90px;top:358px;font-size:8.50px;line-height:8.50px;color:#111;transform:translateY(0.54px) rotate(0.05deg);letter-spacing:-0.300px;">17,527</span>
<svg class="b" style="left:127.30px;top:358.84px;" width="7" height="7" viewBox="0 0 7 7"><rect x="0.75" y="2.35" width="4.5" height="4.1" rx="0.9" fill="#f4f9fd" stroke="#55aae4" stroke-width="1.35"/><path d="M4.2 1.6 H6 V3.6" stroke="#dbe5f2" stroke-width="1.2" fill="none" opacity="0"/><path d="M2.5 4.9 L5.6 1.7" stroke="#3f9be0" stroke-width="1.15" fill="none"/><path d="M3.8 0.1 H6.9 V3.2 Z" fill="#2a8bd8"/></svg>
<span class="t" style="left:137.70px;top:358px;font-size:8.50px;line-height:8.50px;color:#111;transform:translateY(0.54px) rotate(0.05deg);letter-spacing:-0.115px;">346</span>
<svg class="b" style="left:215.20px;top:358.84px;" width="7" height="7" viewBox="0 0 7 7"><rect x="0.75" y="2.35" width="4.5" height="4.1" rx="0.9" fill="#f4f9fd" stroke="#55aae4" stroke-width="1.35"/><path d="M4.2 1.6 H6 V3.6" stroke="#dbe5f2" stroke-width="1.2" fill="none" opacity="0"/><path d="M2.5 4.9 L5.6 1.7" stroke="#3f9be0" stroke-width="1.15" fill="none"/><path d="M3.8 0.1 H6.9 V3.2 Z" fill="#2a8bd8"/></svg>
<span class="t" style="left:225.60px;top:358px;font-size:8.50px;line-height:8.50px;color:#111;transform:translateY(0.54px) rotate(0.05deg);">2</span>
<svg class="b" style="left:284.30px;top:358.84px;" width="7" height="7" viewBox="0 0 7 7"><rect x="0.75" y="2.35" width="4.5" height="4.1" rx="0.9" fill="#f4f9fd" stroke="#55aae4" stroke-width="1.35"/><path d="M4.2 1.6 H6 V3.6" stroke="#dbe5f2" stroke-width="1.2" fill="none" opacity="0"/><path d="M2.5 4.9 L5.6 1.7" stroke="#3f9be0" stroke-width="1.15" fill="none"/><path d="M3.8 0.1 H6.9 V3.2 Z" fill="#2a8bd8"/></svg>
<span class="t" style="left:294.80px;top:358px;font-size:8.50px;line-height:8.50px;color:#111;transform:translateY(0.54px) rotate(0.05deg);letter-spacing:-0.142px;">3,372</span>
<span class="t" style="left:360.30px;top:358px;font-size:8.50px;line-height:8.50px;color:#111;transform:translateY(0.54px) rotate(0.05deg);letter-spacing:-0.014px;">2.99</span>
<span class="t" style="left:429.20px;top:358px;font-size:8.50px;line-height:8.50px;color:#111;transform:translateY(0.54px) rotate(0.05deg);letter-spacing:0.143px;">2007-02-21 12:02:45.996</span>
<span class="t" style="left:19.10px;top:371px;font-size:8.50px;line-height:8.50px;color:#111;transform:translateY(0.08px) rotate(0.05deg);letter-spacing:-0.300px;">25</span>
<span class="t" style="left:44.90px;top:371px;font-size:8.50px;line-height:8.50px;color:#111;transform:translateY(0.08px) rotate(0.05deg);letter-spacing:-0.300px;">17,528</span>
<svg class="b" style="left:127.30px;top:371.38px;" width="7" height="7" viewBox="0 0 7 7"><rect x="0.75" y="2.35" width="4.5" height="4.1" rx="0.9" fill="#f4f9fd" stroke="#55aae4" stroke-width="1.35"/><path d="M4.2 1.6 H6 V3.6" stroke="#dbe5f2" stroke-width="1.2" fill="none" opacity="0"/><path d="M2.5 4.9 L5.6 1.7" stroke="#3f9be0" stroke-width="1.15" fill="none"/><path d="M3.8 0.1 H6.9 V3.2 Z" fill="#2a8bd8"/></svg>
<span class="t" style="left:137.70px;top:371px;font-size:8.50px;line-height:8.50px;color:#111;transform:translateY(0.08px) rotate(0.05deg);letter-spacing:-0.115px;">346</span>
<svg class="b" style="left:215.20px;top:371.38px;" width="7" height="7" viewBox="0 0 7 7"><rect x="0.75" y="2.35" width="4.5" height="4.1" rx="0.9" fill="#f4f9fd" stroke="#55aae4" stroke-width="1.35"/><path d="M4.2 1.6 H6 V3.6" stroke="#dbe5f2" stroke-width="1.2" fill="none" opacity="0"/><path d="M2.5 4.9 L5.6 1.7" stroke="#3f9be0" stroke-width="1.15" fill="none"/><path d="M3.8 0.1 H6.9 V3.2 Z" fill="#2a8bd8"/></svg>
<span class="t" style="left:225.60px;top:371px;font-size:8.50px;line-height:8.50px;color:#111;transform:translateY(0.08px) rotate(0.05deg);">1</span>
<svg class="b" style="left:284.30px;top:371.38px;" width="7" height="7" viewBox="0 0 7 7"><rect x="0.75" y="2.35" width="4.5" height="4.1" rx="0.9" fill="#f4f9fd" stroke="#55aae4" stroke-width="1.35"/><path d="M4.2 1.6 H6 V3.6" stroke="#dbe5f2" stroke-width="1.2" fill="none" opacity="0"/><path d="M2.5 4.9 L5.6 1.7" stroke="#3f9be0" stroke-width="1.15" fill="none"/><path d="M3.8 0.1 H6.9 V3.2 Z" fill="#2a8bd8"/></svg>
<span class="t" style="left:294.80px;top:371px;font-size:8.50px;line-height:8.50px;color:#111;transform:translateY(0.08px) rotate(0.05deg);letter-spacing:-0.300px;">3,421</span>
<span class="t" style="left:360.30px;top:371px;font-size:8.50px;line-height:8.50px;color:#111;transform:translateY(0.08px) rotate(0.05deg);letter-spacing:-0.014px;">2.99</span>
<span class="t" style="left:429.20px;top:371px;font-size:8.50px;line-height:8.50px;color:#111;transform:translateY(0.08px) rotate(0.05deg);letter-spacing:0.084px;">2007-02-21 15:51:24.996</span>
<span class="t" style="left:19.10px;top:383px;font-size:8.50px;line-height:8.50px;color:#111;transform:translateY(0.63px) rotate(0.05deg);letter-spacing:-0.300px;">26</span>
<span class="t" style="left:44.90px;top:383px;font-size:8.50px;line-height:8.50px;color:#111;transform:translateY(0.63px) rotate(0.05deg);letter-spacing:-0.300px;">17,529</span>
<svg class="b" style="left:127.30px;top:383.93px;" width="7" height="7" viewBox="0 0 7 7"><rect x="0.75" y="2.35" width="4.5" height="4.1" rx="0.9" fill="#f4f9fd" stroke="#55aae4" stroke-width="1.35"/><path d="M4.2 1.6 H6 V3.6" stroke="#dbe5f2" stroke-width="1.2" fill="none" opacity="0"/><path d="M2.5 4.9 L5.6 1.7" stroke="#3f9be0" stroke-width="1.15" fill="none"/><path d="M3.8 0.1 H6.9 V3.2 Z" fill="#2a8bd8"/></svg>
<span class="t" style="left:137.70px;top:383px;font-size:8.50px;line-height:8.50px;color:#111;transform:translateY(0.63px) rotate(0.05deg);letter-spacing:-0.115px;">347</span>
<svg class="b" style="left:215.20px;top:383.93px;" width="7" height="7" viewBox="0 0 7 7"><rect x="0.75" y="2.35" width="4.5" height="4.1" rx="0.9" fill="#f4f9fd" stroke="#55aae4" stroke-width="1.35"/><path d="M4.2 1.6 H6 V3.6" stroke="#dbe5f2" stroke-width="1.2" fill="none" opacity="0"/><path d="M2.5 4.9 L5.6 1.7" stroke="#3f9be0" stroke-width="1.15" fill="none"/><path d="M3.8 0.1 H6.9 V3.2 Z" fill="#2a8bd8"/></svg>
<span class="t" style="left:225.60px;top:383px;font-size:8.50px;line-height:8.50px;color:#111;transform:translateY(0.63px) rotate(0.05deg);">2</span>
<svg class="b" style="left:284.30px;top:383.93px;" width="7" height="7" viewBox="0 0 7 7"><rect x="0.75" y="2.35" width="4.5" height="4.1" rx="0.9" fill="#f4f9fd" stroke="#55aae4" stroke-width="1.35"/><path d="M4.2 1.6 H6 V3.6" stroke="#dbe5f2" stroke-width="1.2" fill="none" opacity="0"/><path d="M2.5 4.9 L5.6 1.7" stroke="#3f9be0" stroke-width="1.15" fill="none"/><path d="M3.8 0.1 H6.9 V3.2 Z" fill="#2a8bd8"/></svg>
<span class="t" style="left:294.80px;top:383px;font-size:8.50px;line-height:8.50px;color:#111;transform:translateY(0.63px) rotate(0.05deg);letter-spacing:-0.300px;">1,711</span>
<span class="t" style="left:360.30px;top:383px;font-size:8.50px;line-height:8.50px;color:#111;transform:translateY(0.63px) rotate(0.05deg);letter-spacing:-0.014px;">8.99</span>
<span class="t" style="left:429.20px;top:383px;font-size:8.50px;line-height:8.50px;color:#111;transform:translateY(0.63px) rotate(0.05deg);letter-spacing:0.084px;">2007-02-16 12:40:18.996</span>
<span class="t" style="left:19.10px;top:396px;font-size:8.50px;line-height:8.50px;color:#111;transform:translateY(0.17px) rotate(0.05deg);letter-spacing:-0.300px;">27</span>
<span class="t" style="left:44.90px;top:396px;font-size:8.50px;line-height:8.50px;color:#111;transform:translateY(0.17px) rotate(0.05deg);letter-spacing:-0.300px;">17,530</span>
<svg class="b" style="left:127.30px;top:396.47px;" width="7" height="7" viewBox="0 0 7 7"><rect x="0.75" y="2.35" width="4.5" height="4.1" rx="0.9" fill="#f4f9fd" stroke="#55aae4" stroke-width="1.35"/><path d="M4.2 1.6 H6 V3.6" stroke="#dbe5f2" stroke-width="1.2" fill="none" opacity="0"/><path d="M2.5 4.9 L5.6 1.7" stroke="#3f9be0" stroke-width="1.15" fill="none"/><path d="M3.8 0.1 H6.9 V3.2 Z" fill="#2a8bd8"/></svg>
<span class="t" style="left:137.70px;top:396px;font-size:8.50px;line-height:8.50px;color:#111;transform:translateY(0.17px) rotate(0.05deg);letter-spacing:-0.115px;">347</span>
<svg class="b" style="left:215.20px;top:396.47px;" width="7" height="7" viewBox="0 0 7 7"><rect x="0.75" y="2.35" width="4.5" height="4.1" rx="0.9" fill="#f4f9fd" stroke="#55aae4" stroke-width="1.35"/><path d="M4.2 1.6 H6 V3.6" stroke="#dbe5f2" stroke-width="1.2" fill="none" opacity="0"/><path d="M2.5 4.9 L5.6 1.7" stroke="#3f9be0" stroke-width="1.15" fill="none"/><path d="M3.8 0.1 H6.9 V3.2 Z" fill="#2a8bd8"/></svg>
<span class="t" style="left:225.60px;top:396px;font-size:8.50px;line-height:8.50px;color:#111;transform:translateY(0.17px) rotate(0.05deg);">2</span>
<svg class="b" style="left:284.30px;top:396.47px;" width="7" height="7" viewBox="0 0 7 7"><rect x="0.75" y="2.35" width="4.5" height="4.1" rx="0.9" fill="#f4f9fd" stroke="#55aae4" stroke-width="1.35"/><path d="M4.2 1.6 H6 V3.6" stroke="#dbe5f2" stroke-width="1.2" fill="none" opacity="0"/><path d="M2.5 4.9 L5.6 1.7" stroke="#3f9be0" stroke-width="1.15" fill="none"/><path d="M3.8 0.1 H6.9 V3.2 Z" fill="#2a8bd8"/></svg>
<span class="t" style="left:294.80px;top:396px;font-size:8.50px;line-height:8.50px;color:#111;transform:translateY(0.17px) rotate(0.05deg);letter-spacing:-0.142px;">2,274</span>
<span class="t" style="left:360.30px;top:396px;font-size:8.50px;line-height:8.50px;color:#111;transform:translateY(0.17px) rotate(0.05deg);letter-spacing:-0.014px;">0.99</span>
<span class="t" style="left:429.20px;top:396px;font-size:8.50px;line-height:8.50px;color:#111;transform:translateY(0.17px) rotate(0.05deg);letter-spacing:0.143px;">2007-02-18 04:59:41.996</span>
<span class="t" style="left:19.10px;top:408px;font-size:8.50px;line-height:8.50px;color:#111;transform:translateY(0.72px) rotate(0.05deg);letter-spacing:-0.300px;">28</span>
<span class="t" style="left:44.90px;top:408px;font-size:8.50px;line-height:8.50px;color:#111;transform:translateY(0.72px) rotate(0.05deg);letter-spacing:-0.300px;">17,531</span>
<svg class="b" style="left:127.30px;top:409.02px;" width="7" height="7" viewBox="0 0 7 7"><rect x="0.75" y="2.35" width="4.5" height="4.1" rx="0.9" fill="#f4f9fd" stroke="#55aae4" stroke-width="1.35"/><path d="M4.2 1.6 H6 V3.6" stroke="#dbe5f2" stroke-width="1.2" fill="none" opacity="0"/><path d="M2.5 4.9 L5.6 1.7" stroke="#3f9be0" stroke-width="1.15" fill="none"/><path d="M3.8 0.1 H6.9 V3.2 Z" fill="#2a8bd8"/></svg>
<span class="t" style="left:137.70px;top:408px;font-size:8.50px;line-height:8.50px;color:#111;transform:translateY(0.72px) rotate(0.05deg);letter-spacing:-0.115px;">347</span>
<svg class="b" style="left:215.20px;top:409.02px;" width="7" height="7" viewBox="0 0 7 7"><rect x="0.75" y="2.35" width="4.5" height="4.1" rx="0.9" fill="#f4f9fd" stroke="#55aae4" stroke-width="1.35"/><path d="M4.2 1.6 H6 V3.6" stroke="#dbe5f2" stroke-width="1.2" fill="none" opacity="0"/><path d="M2.5 4.9 L5.6 1.7" stroke="#3f9be0" stroke-width="1.15" fill="none"/><path d="M3.8 0.1 H6.9 V3.2 Z" fill="#2a8bd8"/></svg>
<span class="t" style="left:225.60px;top:408px;font-size:8.50px;line-height:8.50px;color:#111;transform:translateY(0.72px) rotate(0.05deg);">1</span>
<svg class="b" style="left:284.30px;top:409.02px;" width="7" height="7" viewBox="0 0 7 7"><rect x="0.75" y="2.35" width="4.5" height="4.1" rx="0.9" fill="#f4f9fd" stroke="#55aae4" stroke-width="1.35"/><path d="M4.2 1.6 H6 V3.6" stroke="#dbe5f2" stroke-width="1.2" fill="none" opacity="0"/><path d="M2.5 4.9 L5.6 1.7" stroke="#3f9be0" stroke-width="1.15" fill="none"/><path d="M3.8 0.1 H6.9 V3.2 Z" fill="#2a8bd8"/></svg>
<span class="t" style="left:294.80px;top:408px;font-size:8.50px;line-height:8.50px;color:#111;transform:translateY(0.72px) rotate(0.05deg);letter-spacing:-0.142px;">3,026</span>
<span class="t" style="left:360.30px;top:408px;font-size:8.50px;line-height:8.50px;color:#111;transform:translateY(0.72px) rotate(0.05deg);letter-spacing:-0.014px;">4.99</span>
<span class="t" style="left:429.20px;top:408px;font-size:8.50px;line-height:8.50px;color:#111;transform:translateY(0.72px) rotate(0.05deg);letter-spacing:0.143px;">2007-02-20 10:16:26.996</span>
<span class="t" style="left:19.10px;top:421px;font-size:8.50px;line-height:8.50px;color:#111;transform:translateY(0.26px) rotate(0.05deg);letter-spacing:-0.300px;">29</span>
<span class="t" style="left:44.90px;top:421px;font-size:8.50px;line-height:8.50px;color:#111;transform:translateY(0.26px) rotate(0.05deg);letter-spacing:-0.300px;">17,532</span>
<svg class="b" style="left:127.30px;top:421.56px;" width="7" height="7" viewBox="0 0 7 7"><rect x="0.75" y="2.35" width="4.5" height="4.1" rx="0.9" fill="#f4f9fd" stroke="#55aae4" stroke-width="1.35"/><path d="M4.2 1.6 H6 V3.6" stroke="#dbe5f2" stroke-width="1.2" fill="none" opacity="0"/><path d="M2.5 4.9 L5.6 1.7" stroke="#3f9be0" stroke-width="1.15" fill="none"/><path d="M3.8 0.1 H6.9 V3.2 Z" fill="#2a8bd8"/></svg>
<span class="t" style="left:137.70px;top:421px;font-size:8.50px;line-height:8.50px;color:#111;transform:translateY(0.26px) rotate(0.05deg);letter-spacing:-0.115px;">347</span>
<svg class="b" style="left:215.20px;top:421.56px;" width="7" height="7" viewBox="0 0 7 7"><rect x="0.75" y="2.35" width="4.5" height="4.1" rx="0.9" fill="#f4f9fd" stroke="#55aae4" stroke-width="1.35"/><path d="M4.2 1.6 H6 V3.6" stroke="#dbe5f2" stroke-width="1.2" fill="none" opacity="0"/><path d="M2.5 4.9 L5.6 1.7" stroke="#3f9be0" stroke-width="1.15" fill="none"/><path d="M3.8 0.1 H6.9 V3.2 Z" fill="#2a8bd8"/></svg>
<span class="t" style="left:225.60px;top:421px;font-size:8.50px;line-height:8.50px;color:#111;transform:translateY(0.26px) rotate(0.05deg);">1</span>
<svg class="b" style="left:284.30px;top:421.56px;" width="7" height="7" viewBox="0 0 7 7"><rect x="0.75" y="2.35" width="4.5" height="4.1" rx="0.9" fill="#f4f9fd" stroke="#55aae4" stroke-width="1.35"/><path d="M4.2 1.6 H6 V3.6" stroke="#dbe5f2" stroke-width="1.2" fill="none" opacity="0"/><path d="M2.5 4.9 L5.6 1.7" stroke="#3f9be0" stroke-width="1.15" fill="none"/><path d="M3.8 0.1 H6.9 V3.2 Z" fill="#2a8bd8"/></svg>
<span class="t" style="left:294.80px;top:421px;font-size:8.50px;line-height:8.50px;color:#111;transform:translateY(0.26px) rotate(0.05deg);letter-spacing:-0.142px;">3,092</span>
<span class="t" style="left:360.30px;top:421px;font-size:8.50px;line-height:8.50px;color:#111;transform:translateY(0.26px) rotate(0.05deg);letter-spacing:-0.014px;">8.99</span>
<span class="t" style="left:429.20px;top:421px;font-size:8.50px;line-height:8.50px;color:#111;transform:translateY(0.26px) rotate(0.05deg);letter-spacing:0.202px;">2007-02-20 14:33:08.996</span>
<span class="t" style="left:19.10px;top:433px;font-size:8.50px;line-height:8.50px;color:#111;transform:translateY(0.81px) rotate(0.05deg);letter-spacing:-0.300px;">30</span>
<span class="t" style="left:44.90px;top:433px;font-size:8.50px;line-height:8.50px;color:#111;transform:translateY(0.81px) rotate(0.05deg);letter-spacing:-0.300px;">17,533</span>
<svg class="b" style="left:127.30px;top:434.11px;" width="7" height="7" viewBox="0 0 7 7"><rect x="0.75" y="2.35" width="4.5" height="4.1" rx="0.9" fill="#f4f9fd" stroke="#55aae4" stroke-width="1.35"/><path d="M4.2 1.6 H6 V3.6" stroke="#dbe5f2" stroke-width="1.2" fill="none" opacity="0"/><path d="M2.5 4.9 L5.6 1.7" stroke="#3f9be0" stroke-width="1.15" fill="none"/><path d="M3.8 0.1 H6.9 V3.2 Z" fill="#2a8bd8"/></svg>
<span class="t" style="left:137.70px;top:433px;font-size:8.50px;line-height:8.50px;color:#111;transform:translateY(0.81px) rotate(0.05deg);letter-spacing:-0.115px;">347</span>
<svg class="b" style="left:215.20px;top:434.11px;" width="7" height="7" viewBox="0 0 7 7"><rect x="0.75" y="2.35" width="4.5" height="4.1" rx="0.9" fill="#f4f9fd" stroke="#55aae4" stroke-width="1.35"/><path d="M4.2 1.6 H6 V3.6" stroke="#dbe5f2" stroke-width="1.2" fill="none" opacity="0"/><path d="M2.5 4.9 L5.6 1.7" stroke="#3f9be0" stroke-width="1.15" fill="none"/><path d="M3.8 0.1 H6.9 V3.2 Z" fill="#2a8bd8"/></svg>
<span class="t" style="left:225.60px;top:433px;font-size:8.50px;line-height:8.50px;color:#111;transform:translateY(0.81px) rotate(0.05deg);">1</span>
<svg class="b" style="left:284.30px;top:434.11px;" width="7" height="7" viewBox="0 0 7 7"><rect x="0.75" y="2.35" width="4.5" height="4.1" rx="0.9" fill="#f4f9fd" stroke="#55aae4" stroke-width="1.35"/><path d="M4.2 1.6 H6 V3.6" stroke="#dbe5f2" stroke-width="1.2" fill="none" opacity="0"/><path d="M2.5 4.9 L5.6 1.7" stroke="#3f9be0" stroke-width="1.15" fill="none"/><path d="M3.8 0.1 H6.9 V3.2 Z" fill="#2a8bd8"/></svg>
<span class="t" style="left:294.80px;top:433px;font-size:8.50px;line-height:8.50px;color:#111;transform:translateY(0.81px) rotate(0.05deg);letter-spacing:-0.142px;">3,326</span>
<span class="t" style="left:360.30px;top:433px;font-size:8.50px;line-height:8.50px;color:#111;transform:translateY(0.81px) rotate(0.05deg);letter-spacing:-0.014px;">7.99</span>
<span class="t" style="left:429.20px;top:433px;font-size:8.50px;line-height:8.50px;color:#111;transform:translateY(0.81px) rotate(0.05deg);letter-spacing:0.143px;">2007-02-21 07:33:16.996</span>
<span class="t" style="left:19.10px;top:446px;font-size:8.50px;line-height:8.50px;color:#111;transform:translateY(0.35px) rotate(0.05deg);letter-spacing:-0.300px;">31</span>
<span class="t" style="left:44.90px;top:446px;font-size:8.50px;line-height:8.50px;color:#111;transform:translateY(0.35px) rotate(0.05deg);letter-spacing:-0.300px;">17,534</span>
<svg class="b" style="left:127.30px;top:446.65px;" width="7" height="7" viewBox="0 0 7 7"><rect x="0.75" y="2.35" width="4.5" height="4.1" rx="0.9" fill="#f4f9fd" stroke="#55aae4" stroke-width="1.35"/><path d="M4.2 1.6 H6 V3.6" stroke="#dbe5f2" stroke-width="1.2" fill="none" opacity="0"/><path d="M2.5 4.9 L5.6 1.7" stroke="#3f9be0" stroke-width="1.15" fill="none"/><path d="M3.8 0.1 H6.9 V3.2 Z" fill="#2a8bd8"/></svg>
<span class="t" style="left:137.70px;top:446px;font-size:8.50px;line-height:8.50px;color:#111;transform:translateY(0.35px) rotate(0.05deg);letter-spacing:-0.115px;">348</span>
<svg class="b" style="left:215.20px;top:446.65px;" width="7" height="7" viewBox="0 0 7 7"><rect x="0.75" y="2.35" width="4.5" height="4.1" rx="0.9" fill="#f4f9fd" stroke="#55aae4" stroke-width="1.35"/><path d="M4.2 1.6 H6 V3.6" stroke="#dbe5f2" stroke-width="1.2" fill="none" opacity="0"/><path d="M2.5 4.9 L5.6 1.7" stroke="#3f9be0" stroke-width="1.15" fill="none"/><path d="M3.8 0.1 H6.9 V3.2 Z" fill="#2a8bd8"/></svg>
<span class="t" style="left:225.60px;top:446px;font-size:8.50px;line-height:8.50px;color:#111;transform:translateY(0.35px) rotate(0.05deg);">1</span>
<svg class="b" style="left:284.30px;top:446.65px;" width="7" height="7" viewBox="0 0 7 7"><rect x="0.75" y="2.35" width="4.5" height="4.1" rx="0.9" fill="#f4f9fd" stroke="#55aae4" stroke-width="1.35"/><path d="M4.2 1.6 H6 V3.6" stroke="#dbe5f2" stroke-width="1.2" fill="none" opacity="0"/><path d="M2.5 4.9 L5.6 1.7" stroke="#3f9be0" stroke-width="1.15" fill="none"/><path d="M3.8 0.1 H6.9 V3.2 Z" fill="#2a8bd8"/></svg>
<span class="t" style="left:294.80px;top:446px;font-size:8.50px;line-height:8.50px;color:#111;transform:translateY(0.35px) rotate(0.05deg);letter-spacing:-0.300px;">1,654</span>
<span class="t" style="left:360.30px;top:446px;font-size:8.50px;line-height:8.50px;color:#111;transform:translateY(0.35px) rotate(0.05deg);letter-spacing:-0.014px;">2.99</span>
<span class="t" style="left:429.20px;top:446px;font-size:8.50px;line-height:8.50px;color:#111;transform:translateY(0.35px) rotate(0.05deg);letter-spacing:0.053px;">2007-02-16 08:11:14.996</span>
<span class="t" style="left:19.10px;top:458px;font-size:8.50px;line-height:8.50px;color:#111;transform:translateY(0.90px) rotate(0.05deg);letter-spacing:-0.300px;">32</span>
<span class="t" style="left:44.90px;top:458px;font-size:8.50px;line-height:8.50px;color:#111;transform:translateY(0.90px) rotate(0.05deg);letter-spacing:-0.300px;">17,535</span>
<svg class="b" style="left:127.30px;top:459.19px;" width="7" height="7" viewBox="0 0 7 7"><rect x="0.75" y="2.35" width="4.5" height="4.1" rx="0.9" fill="#f4f9fd" stroke="#55aae4" stroke-width="1.35"/><path d="M4.2 1.6 H6 V3.6" stroke="#dbe5f2" stroke-width="1.2" fill="none" opacity="0"/><path d="M2.5 4.9 L5.6 1.7" stroke="#3f9be0" stroke-width="1.15" fill="none"/><path d="M3.8 0.1 H6.9 V3.2 Z" fill="#2a8bd8"/></svg>
<span class="t" style="left:137.70px;top:458px;font-size:8.50px;line-height:8.50px;color:#111;transform:translateY(0.90px) rotate(0.05deg);letter-spacing:-0.115px;">348</span>
<svg class="b" style="left:215.20px;top:459.19px;" width="7" height="7" viewBox="0 0 7 7"><rect x="0.75" y="2.35" width="4.5" height="4.1" rx="0.9" fill="#f4f9fd" stroke="#55aae4" stroke-width="1.35"/><path d="M4.2 1.6 H6 V3.6" stroke="#dbe5f2" stroke-width="1.2" fill="none" opacity="0"/><path d="M2.5 4.9 L5.6 1.7" stroke="#3f9be0" stroke-width="1.15" fill="none"/><path d="M3.8 0.1 H6.9 V3.2 Z" fill="#2a8bd8"/></svg>
<span class="t" style="left:225.60px;top:458px;font-size:8.50px;line-height:8.50px;color:#111;transform:translateY(0.90px) rotate(0.05deg);">1</span>
<svg class="b" style="left:284.30px;top:459.19px;" width="7" height="7" viewBox="0 0 7 7"><rect x="0.75" y="2.35" width="4.5" height="4.1" rx="0.9" fill="#f4f9fd" stroke="#55aae4" stroke-width="1.35"/><path d="M4.2 1.6 H6 V3.6" stroke="#dbe5f2" stroke-width="1.2" fill="none" opacity="0"/><path d="M2.5 4.9 L5.6 1.7" stroke="#3f9be0" stroke-width="1.15" fill="none"/><path d="M3.8 0.1 H6.9 V3.2 Z" fill="#2a8bd8"/></svg>
<span class="t" style="left:294.80px;top:458px;font-size:8.50px;line-height:8.50px;color:#111;transform:translateY(0.90px) rotate(0.05deg);letter-spacing:-0.300px;">2,041</span>
<span class="t" style="left:360.30px;top:458px;font-size:8.50px;line-height:8.50px;color:#111;transform:translateY(0.90px) rotate(0.05deg);letter-spacing:-0.014px;">8.99</span>
<span class="t" style="left:429.20px;top:458px;font-size:8.50px;line-height:8.50px;color:#111;transform:translateY(0.90px) rotate(0.05deg);letter-spacing:0.143px;">2007-02-17 12:47:26.996</span>
<span class="t" style="left:19.10px;top:471px;font-size:8.50px;line-height:8.50px;color:#111;transform:translateY(0.44px) rotate(0.05deg);letter-spacing:-0.300px;">33</span>
<span class="t" style="left:44.90px;top:471px;font-size:8.50px;line-height:8.50px;color:#111;transform:translateY(0.44px) rotate(0.05deg);letter-spacing:-0.300px;">17,536</span>
<svg class="b" style="left:127.30px;top:471.74px;" width="7" height="7" viewBox="0 0 7 7"><rect x="0.75" y="2.35" width="4.5" height="4.1" rx="0.9" fill="#f4f9fd" stroke="#55aae4" stroke-width="1.35"/><path d="M4.2 1.6 H6 V3.6" stroke="#dbe5f2" stroke-width="1.2" fill="none" opacity="0"/><path d="M2.5 4.9 L5.6 1.7" stroke="#3f9be0" stroke-width="1.15" fill="none"/><path d="M3.8 0.1 H6.9 V3.2 Z" fill="#2a8bd8"/></svg>
<span class="t" style="left:137.70px;top:471px;font-size:8.50px;line-height:8.50px;color:#111;transform:translateY(0.44px) rotate(0.05deg);letter-spacing:-0.115px;">348</span>
<svg class="b" style="left:215.20px;top:471.74px;" width="7" height="7" viewBox="0 0 7 7"><rect x="0.75" y="2.35" width="4.5" height="4.1" rx="0.9" fill="#f4f9fd" stroke="#55aae4" stroke-width="1.35"/><path d="M4.2 1.6 H6 V3.6" stroke="#dbe5f2" stroke-width="1.2" fill="none" opacity="0"/><path d="M2.5 4.9 L5.6 1.7" stroke="#3f9be0" stroke-width="1.15" fill="none"/><path d="M3.8 0.1 H6.9 V3.2 Z" fill="#2a8bd8"/></svg>
<span class="t" style="left:225.60px;top:471px;font-size:8.50px;line-height:8.50px;color:#111;transform:translateY(0.44px) rotate(0.05deg);">2</span>
<svg class="b" style="left:284.30px;top:471.74px;" width="7" height="7" viewBox="0 0 7 7"><rect x="0.75" y="2.35" width="4.5" height="4.1" rx="0.9" fill="#f4f9fd" stroke="#55aae4" stroke-width="1.35"/><path d="M4.2 1.6 H6 V3.6" stroke="#dbe5f2" stroke-width="1.2" fill="none" opacity="0"/><path d="M2.5 4.9 L5.6 1.7" stroke="#3f9be0" stroke-width="1.15" fill="none"/><path d="M3.8 0.1 H6.9 V3.2 Z" fill="#2a8bd8"/></svg>
<span class="t" style="left:294.80px;top:471px;font-size:8.50px;line-height:8.50px;color:#111;transform:translateY(0.44px) rotate(0.05deg);letter-spacing:-0.142px;">2,499</span>
<span class="t" style="left:360.30px;top:471px;font-size:8.50px;line-height:8.50px;color:#111;transform:translateY(0.44px) rotate(0.05deg);letter-spacing:-0.014px;">0.99</span>
<span class="t" style="left:429.20px;top:471px;font-size:8.50px;line-height:8.50px;color:#111;transform:translateY(0.44px) rotate(0.05deg);letter-spacing:0.143px;">2007-02-18 21:30:02.996</span>
<div class="b" style="left:40.00px;top:67.00px;width:1.00px;height:417.00px;background:#2e2e2e;"></div>
<svg class="b" style="left:534px;top:51px" width="1" height="17"><rect x="0.00" y="0.00" width="0.80" height="17.00" fill="#6b6b6b"/></svg>
<svg class="b" style="left:426px;top:67px" width="109" height="2"><rect x="0.40" y="0.10" width="108.20" height="1.00" fill="#6f7b88"/></svg>
<div class="b" style="left:538px;top:50.4px;width:51.6px;height:15.2px;background:linear-gradient(#f0f0f0,#fbfbfb);border-top:1.4px solid #c2c2c2;border-right:1px solid #c6c6c6;border-radius:1px 4px 0 0;box-sizing:border-box;"></div>
<svg class="b" style="left:589px;top:65px" width="287" height="1"><rect x="0.60" y="0.00" width="286.00" height="1.00" fill="#c2c2c2"/></svg>
<svg class="b" style="left:540.30px;top:53.00px;" width="9.6" height="9.8" viewBox="0 0 9.6 9.8"><rect x="0.2" y="0.2" width="9" height="7.6" rx="1.3" fill="#3b92d8"/><rect x="1.1" y="2.4" width="3.2" height="1.8" fill="#bfdcf4"/><rect x="5" y="2.4" width="3.3" height="1.8" fill="#8cc2ec"/><rect x="1.1" y="4.8" width="2.2" height="2" fill="#e6f1fb"/><rect x="3.8" y="5" width="5.8" height="4.4" rx="0.7" fill="#fff" stroke="#3b92d8" stroke-width="0.8"/><path d="M5.2 7.4 H8.2" stroke="#7db8e8" stroke-width="0.8" stroke-dasharray="0.7 0.5"/></svg>
<span class="t" style="left:552.90px;top:53px;font-size:8.50px;line-height:8.50px;color:#1a1a1a;transform:translateY(0.70px) rotate(0.05deg);letter-spacing:-0.300px;">Value</span>
<svg class="b" style="left:579.30px;top:55.50px;" width="6.6" height="5.8" viewBox="0 0 6.6 5.8"><path d="M0.5 0.4 L6.0 5.4 M6.0 0.4 L0.5 5.4" stroke="#1c1c1c" stroke-width="0.95" fill="none"/></svg>
<svg class="b" style="left:791.60px;top:54.40px;" width="10.4" height="7.4" viewBox="0 0 10.4 7.4"><path d="M4.4 1 H9.8 M4.4 0.7 V2.1 M9.8 0.7 V2.1 M7.1 1 V6.2 M6.1 6.3 H8.1" stroke="#2f8fd8" stroke-width="0.8" fill="none"/><path d="M1.7 2.2 L0.6 3.7 L1.7 5.2" stroke="#6fb2e8" stroke-width="0.7" fill="none"/><path d="M3 1.8 V5.6" stroke="#8cc2ec" stroke-width="0.6"/></svg>
<div class="b" style="left:804.3px;top:51.4px;width:13.5px;height:13px;background:#e4e4e4;border-radius:1.5px;border-bottom:1px solid #cdcdcd;box-sizing:border-box"></div>
<svg class="b" style="left:806.40px;top:53.60px;" width="8.8" height="8.8" viewBox="0 0 10 10"><circle cx="5" cy="5" r="4.2" fill="#fff" stroke="#2f8fd8" stroke-width="1.45"/><path d="M5.2 2.3 V5.3 L3 6.7" stroke="#2f8fd8" stroke-width="1.25" fill="none"/></svg>
<svg class="b" style="left:819.50px;top:53.00px;" width="10" height="10" viewBox="0 0 10 10"><path d="M0.5 1.4 Q0.5 0.5 1.4 0.5 H7 L9.1 2.5 V8.4 Q9.1 9.3 8.2 9.3 H1.4 Q0.5 9.3 0.5 8.4 Z" fill="#8bd07c" stroke="#62b853" stroke-width="0.8"/><rect x="2.4" y="0.9" width="4.4" height="3" fill="#cdebc6"/><rect x="5.2" y="1.2" width="1.2" height="2.1" fill="#62b853"/></svg>
<div class="b" style="left:831.3px;top:51.4px;width:13.5px;height:13px;background:#e4e4e4;border-radius:1.5px;border-bottom:1px solid #cdcdcd;box-sizing:border-box"></div>
<svg class="b" style="left:833.20px;top:53.00px;" width="10" height="10" viewBox="0 0 10 10"><path d="M0.5 1.4 Q0.5 0.5 1.4 0.5 H7 L9.1 2.5 V8.4 Q9.1 9.3 8.2 9.3 H1.4 Q0.5 9.3 0.5 8.4 Z" fill="#8bd07c" stroke="#62b853" stroke-width="0.8"/><rect x="2.4" y="0.9" width="4.4" height="3" fill="#cdebc6"/><rect x="5.2" y="1.2" width="1.2" height="2.1" fill="#62b853"/><circle cx="7.9" cy="7.7" r="2.1" fill="#2f8fd8" stroke="#e8f3fb" stroke-width="0.6"/></svg>
<svg class="b" style="left:850.20px;top:53.40px;" width="4" height="9.4" viewBox="0 0 4 9.4"><g fill="#fff" stroke="#7a7a7a" stroke-width="0.7"><circle cx="2" cy="1.6" r="1.15"/><circle cx="2" cy="4.6" r="1.15"/><circle cx="2" cy="7.6" r="1.15"/></g></svg>
<svg class="b" style="left:862.00px;top:53.60px;" width="8" height="4.2" viewBox="0 0 8 4.2"><rect x="0.6" y="0.7" width="6.2" height="2.5" rx="0.3" fill="#fff" stroke="#1c1c1c" stroke-width="0.95"/></svg>
<span class="t" style="left:545.30px;top:77px;font-size:7.60px;line-height:7.60px;color:#333;transform:translateY(0.07px) rotate(0.05deg);letter-spacing:-0.018px;-webkit-text-stroke:0.15px;">Date</span>
<span class="t" style="left:569.80px;top:76px;font-size:8.90px;line-height:8.90px;color:#333;transform:translateY(0.37px) rotate(0.05deg);letter-spacing:-0.038px;-webkit-text-stroke:0.15px;">16.02.2007</span>
<svg class="b" style="left:567px;top:86px" width="301" height="2"><rect x="0.30" y="0.20" width="300.70" height="1.50" fill="#e7e7e7"/></svg>
<div class="b" style="left:856.2px;top:73px;width:11.8px;height:12.6px;background:#fff;border-radius:3px;box-shadow:0 0.4px 1.2px rgba(0,0,0,0.25);"></div>
<svg class="b" style="left:859.50px;top:77.70px;" width="5.2" height="3.6" viewBox="0 0 5.2 3.6"><path d="M0.6 0.6 L2.6 2.7 L4.6 0.6" stroke="#1a1a1a" stroke-width="1.25" fill="none"/></svg>
<span class="t" style="left:545.30px;top:96px;font-size:7.60px;line-height:7.60px;color:#333;transform:translateY(0.27px) rotate(0.05deg);-webkit-text-stroke:0.15px;">Time</span>
<span class="t" style="left:569.20px;top:95px;font-size:8.90px;line-height:8.90px;color:#333;transform:translateY(0.67px) rotate(0.05deg);letter-spacing:-0.006px;-webkit-text-stroke:0.15px;">22:41:45</span>
<svg class="b" style="left:567px;top:106px" width="290" height="2"><rect x="0.30" y="0.00" width="289.50" height="1.50" fill="#e7e7e7"/></svg>
<svg class="b" style="left:856px;top:91px" width="12" height="17"><rect x="0.70" y="0.70" width="11.30" height="15.40" fill="#ededed"/></svg>
<div class="b" style="left:858.8px;top:93.6px;width:7px;height:4.8px;background:#fff;border-radius:1.6px;box-shadow:0 0.3px 0.8px rgba(0,0,0,0.3);"></div>
<div class="b" style="left:858.8px;top:99.8px;width:7px;height:4.8px;background:#fff;border-radius:1.6px;box-shadow:0 0.3px 0.8px rgba(0,0,0,0.3);"></div>
<svg class="b" style="left:860.00px;top:94.50px;" width="4.6" height="3.2" viewBox="0 0 4.6 3.2"><path d="M0.5 2.6 L2.3 0.7 L4.1 2.6" stroke="#1a1a1a" stroke-width="1.15" fill="none"/></svg>
<svg class="b" style="left:860.00px;top:100.70px;" width="4.6" height="3.2" viewBox="0 0 4.6 3.2"><path d="M0.5 0.6 L2.3 2.5 L4.1 0.6" stroke="#1a1a1a" stroke-width="1.15" fill="none"/></svg>
<div class="b" style="left:876px;top:50.5px;width:12px;height:48.6px;background:#ececec;border:1px solid #c4c4c4;border-right:none;border-radius:2px 0 0 2px;box-sizing:border-box;"></div>
<svg class="b" style="left:877.50px;top:56.00px;" width="9.6" height="9" viewBox="0 0 9.6 9"><rect x="0.3" y="0.2" width="9" height="7.8" rx="0.8" fill="#2f8fd8"/><rect x="1.5" y="1.9" width="2.6" height="4" fill="#e9f3fc"/><rect x="5" y="5.2" width="2.2" height="1.6" fill="#e9f3fc"/><circle cx="1.5" cy="7.2" r="1.25" fill="#fff" stroke="#2f8fd8" stroke-width="0.8"/></svg>
<span class="t" style="left:886.02px;top:66.90px;font-size:8.4px;line-height:8.4px;color:#111;letter-spacing:-0.097px;-webkit-text-stroke:0.45px;transform-origin:0 0;transform:rotate(90deg);">Panels</span>
<svg class="b" style="left:877.00px;top:102.30px;" width="9.4" height="9" viewBox="0 0 9.4 9"><g><rect x="0" y="0" width="4.2" height="4" rx="0.8" fill="#2f8fd8"/><rect x="5" y="0" width="4.2" height="4" rx="0.8" fill="#2f8fd8"/><rect x="0" y="4.9" width="4.2" height="4" rx="0.8" fill="#2f8fd8"/><rect x="5" y="4.9" width="4.2" height="4" rx="0.8" fill="#f28c1c"/></g><g fill="#d6e9f8"><rect x="1.2" y="1.6" width="1.8" height="0.8"/><rect x="6.2" y="1.6" width="1.8" height="0.8"/><rect x="1.2" y="6.5" width="1.8" height="0.8"/></g><rect x="6.2" y="6.5" width="1.8" height="0.8" fill="#fde3c0"/></svg>
<svg class="b" style="left:876.80px;top:115.80px;" width="9.8" height="9.8" viewBox="0 0 9.8 9.8"><circle cx="4.9" cy="4.9" r="4.1" fill="#fff" stroke="#2f8fd8" stroke-width="1.2"/><g fill="#3b92d8"><rect x="3" y="2.9" width="1.4" height="1.5"/><rect x="5.4" y="2.9" width="1.4" height="1.5"/><rect x="3" y="5.3" width="1.4" height="1.5"/><rect x="5.4" y="5.3" width="1.4" height="1.5"/></g></svg>
<svg class="b" style="left:877.00px;top:130.00px;" width="9.2" height="9.4" viewBox="0 0 9.2 9.4"><rect x="0.1" y="0.1" width="9" height="9.1" rx="1" fill="#2f8fd8"/><path d="M1.3 8 V5 L2.1 4 L2.9 5 L3.7 4 L4.5 5 L5.3 4 L6.1 5 L6.9 4 L7.8 5 V8 Z" fill="#f2f8fd"/><g fill="#cfe6f8"><rect x="1.6" y="1.5" width="0.8" height="0.8"/><rect x="3.3" y="1.5" width="0.8" height="0.8"/><rect x="5" y="1.5" width="0.8" height="0.8"/><rect x="6.7" y="1.5" width="0.8" height="0.8"/><rect x="2.4" y="2.7" width="0.8" height="0.8"/><rect x="4.1" y="2.7" width="0.8" height="0.8"/><rect x="5.8" y="2.7" width="0.8" height="0.8"/></g></svg>
<svg class="b" style="left:877.00px;top:143.60px;" width="9.2" height="9.8" viewBox="0 0 9.2 9.8"><rect x="0.1" y="2.3" width="8.9" height="7.3" rx="0.8" fill="#2f8fd8"/><path d="M0.1 4.8 H9 M0.1 7.2 H9" stroke="#8cc2ec" stroke-width="0.6"/><path d="M1 6 H8.2" stroke="#e6f1fb" stroke-width="0.8" stroke-dasharray="1.2 0.8"/><rect x="2.4" y="0.2" width="1.8" height="9.4" fill="#f39a33"/><path d="M3.3 0 L4.4 1.4 H2.2 Z" fill="#f28c1c"/></svg>
<div class="b" style="left:876.3px;top:156.2px;width:10.8px;height:12.1px;background:#dddddd;border:1px solid #b9b9b9;border-radius:1px;box-sizing:border-box"></div>
<svg class="b" style="left:877.10px;top:157.70px;" width="9.4" height="9.2" viewBox="0 0 9.4 9.2"><rect x="0.1" y="0.1" width="9" height="8.9" rx="0.9" fill="#2f8fd8"/><rect x="1" y="2.2" width="4.3" height="3" fill="#8cc2ec"/><rect x="6" y="2.2" width="2.2" height="3" fill="#f2f8fd"/><rect x="1" y="6" width="3.6" height="1.6" fill="#f2f8fd"/><rect x="5.3" y="5.6" width="3.8" height="3.4" rx="0.4" fill="#dcecf9" stroke="#2f8fd8" stroke-width="0.6"/></svg>
<svg class="b" style="left:20.00px;top:486.40px;" width="9.6" height="10" viewBox="0 0 9.6 10"><g fill="none" stroke="#4a9fe0" stroke-width="0.95"><rect x="0.7" y="1.5" width="5" height="3.8" rx="1.2"/><rect x="3.7" y="4.7" width="5.1" height="3.8" rx="1.2"/><path d="M3.4 0.3 L5 1.5 L3.4 2.7"/><path d="M6 7.3 L4.4 8.5 L6 9.7"/></g></svg>
<span class="t" style="left:31.00px;top:487px;font-size:8.50px;line-height:8.50px;color:#8c8c8c;transform:translateY(0.20px) rotate(0.05deg);letter-spacing:-0.160px;-webkit-text-stroke:0.15px;">Refresh</span>
<svg class="b" style="left:64.30px;top:490.60px;" width="3" height="2.2" viewBox="0 0 3 2.2"><path d="M0 0H3L1.5 2.2Z" fill="#222"/></svg>
<svg class="b" style="left:71px;top:486px" width="1" height="2"><rect x="0.05" y="0.80" width="0.90" height="1.00" fill="#ccc5b5"/></svg>
<svg class="b" style="left:71px;top:488px" width="1" height="2"><rect x="0.05" y="0.80" width="0.90" height="1.00" fill="#ccc5b5"/></svg>
<svg class="b" style="left:71px;top:490px" width="1" height="2"><rect x="0.05" y="0.80" width="0.90" height="1.00" fill="#ccc5b5"/></svg>
<svg class="b" style="left:71px;top:492px" width="1" height="2"><rect x="0.05" y="0.80" width="0.90" height="1.00" fill="#ccc5b5"/></svg>
<svg class="b" style="left:71px;top:494px" width="1" height="2"><rect x="0.05" y="0.80" width="0.90" height="1.00" fill="#ccc5b5"/></svg>
<svg class="b" style="left:75.80px;top:487.00px;" width="9.4" height="9.4" viewBox="0 0 9.4 9.4"><circle cx="4.7" cy="4.7" r="4" fill="#fff" stroke="#b9dfb2" stroke-width="0.9"/><path d="M2.6 4.8 L4.2 6.4 L7 3.2" stroke="#a8d8a0" stroke-width="0.9" fill="none"/></svg>
<span class="t" style="left:87.60px;top:487px;font-size:8.50px;line-height:8.50px;color:#c6c6c6;transform:translateY(0.20px) rotate(0.05deg);letter-spacing:-0.300px;">Save</span>
<svg class="b" style="left:109.20px;top:490.80px;" width="2.6" height="2" viewBox="0 0 2.6 2"><path d="M0 0H2.6L1.3 2Z" fill="#bcbcbc"/></svg>
<svg class="b" style="left:116.80px;top:487.60px;" width="8.6" height="8.4" viewBox="0 0 8.6 8.4"><rect x="0.5" y="0.5" width="7.4" height="7.2" rx="1" fill="#fff" stroke="#f2a7a2" stroke-width="0.9"/><path d="M2.6 2.6 L5.8 5.6 M5.8 2.6 L2.6 5.6" stroke="#ee8f8a" stroke-width="0.9"/></svg>
<span class="t" style="left:127.50px;top:487px;font-size:8.50px;line-height:8.50px;color:#c6c6c6;transform:translateY(0.20px) rotate(0.05deg);letter-spacing:-0.212px;">Cancel</span>
<svg class="b" style="left:157px;top:486px" width="2" height="2"><rect x="0.35" y="0.80" width="0.90" height="1.00" fill="#ccc5b5"/></svg>
<svg class="b" style="left:157px;top:488px" width="2" height="2"><rect x="0.35" y="0.80" width="0.90" height="1.00" fill="#ccc5b5"/></svg>
<svg class="b" style="left:157px;top:490px" width="2" height="2"><rect x="0.35" y="0.80" width="0.90" height="1.00" fill="#ccc5b5"/></svg>
<svg class="b" style="left:157px;top:492px" width="2" height="2"><rect x="0.35" y="0.80" width="0.90" height="1.00" fill="#ccc5b5"/></svg>
<svg class="b" style="left:157px;top:494px" width="2" height="2"><rect x="0.35" y="0.80" width="0.90" height="1.00" fill="#ccc5b5"/></svg>
<svg class="b" style="left:162.00px;top:487.20px;" width="11" height="9.4" viewBox="0 0 11 9.4"><g fill="#2b87d3"><rect x="0" y="0.3" width="9.2" height="1.25"/><rect x="0" y="2.7" width="9.2" height="1.25"/><rect x="0" y="5.1" width="5.4" height="1.25"/><rect x="0" y="7.5" width="4.2" height="1.25"/></g><path d="M5.2 8.9 L9.6 4.5" stroke="#2b87d3" stroke-width="1.5"/></svg>
<svg class="b" style="left:176.00px;top:487.20px;" width="11" height="9.4" viewBox="0 0 11 9.4"><g fill="#2b87d3"><rect x="0" y="0.3" width="9.2" height="1.25"/><rect x="0" y="2.7" width="4" height="1.25"/><rect x="0" y="5.1" width="4" height="1.25"/><rect x="0" y="7.5" width="4" height="1.25"/></g><path d="M7.6 2.6 V8.8 M4.5 5.7 H10.7" stroke="#2eaa4c" stroke-width="1.7"/></svg>
<svg class="b" style="left:190.00px;top:487.20px;" width="11" height="9.4" viewBox="0 0 11 9.4"><g fill="#2b87d3"><rect x="0" y="0.3" width="9.2" height="1.25"/><rect x="0" y="2.7" width="3" height="1.25"/><rect x="0" y="5.1" width="3" height="1.25"/><rect x="0" y="7.5" width="3" height="1.25"/></g><circle cx="6.7" cy="5.7" r="1.3" fill="#2eaa4c"/><path d="M5 3.4 Q3.4 5.7 5 8 M8.4 3.4 Q10 5.7 8.4 8" stroke="#2b87d3" stroke-width="0.8" fill="none"/></svg>
<svg class="b" style="left:203.80px;top:487.20px;" width="11" height="9.4" viewBox="0 0 11 9.4"><g fill="#2b87d3"><rect x="0" y="0.3" width="9.2" height="1.25"/><rect x="0" y="2.7" width="3.6" height="1.25"/><rect x="0" y="5.1" width="3.6" height="1.25"/><rect x="0" y="7.5" width="3.6" height="1.25"/></g><rect x="4.8" y="4.6" width="4.6" height="1.7" fill="#e2574d"/></svg>
<svg class="b" style="left:217px;top:486px" width="2" height="2"><rect x="0.75" y="0.80" width="0.90" height="1.00" fill="#ccc5b5"/></svg>
<svg class="b" style="left:217px;top:488px" width="2" height="2"><rect x="0.75" y="0.80" width="0.90" height="1.00" fill="#ccc5b5"/></svg>
<svg class="b" style="left:217px;top:490px" width="2" height="2"><rect x="0.75" y="0.80" width="0.90" height="1.00" fill="#ccc5b5"/></svg>
<svg class="b" style="left:217px;top:492px" width="2" height="2"><rect x="0.75" y="0.80" width="0.90" height="1.00" fill="#ccc5b5"/></svg>
<svg class="b" style="left:217px;top:494px" width="2" height="2"><rect x="0.75" y="0.80" width="0.90" height="1.00" fill="#ccc5b5"/></svg>
<svg class="b" style="left:223.00px;top:487.50px;" width="7.6" height="8.6" viewBox="0 0 7.6 8.6"><path d="M0.9 0.7 V7.7" stroke="#2485d6" stroke-width="1.55" fill="none"/><path d="M6.3 0.9 L3.1 4.2 L6.3 7.5" stroke="#2485d6" stroke-width="1.55" fill="none"/></svg>
<svg class="b" style="left:238.00px;top:487.50px;" width="5.6" height="8.6" viewBox="0 0 5.6 8.6"><path d="M4.5 0.9 L1.3 4.2 L4.5 7.5" stroke="#2485d6" stroke-width="1.55" fill="none"/></svg>
<svg class="b" style="left:252.00px;top:487.50px;" width="5.6" height="8.6" viewBox="0 0 5.6 8.6"><path d="M1.1 0.9 L4.3 4.2 L1.1 7.5" stroke="#2485d6" stroke-width="1.55" fill="none"/></svg>
<svg class="b" style="left:265.00px;top:487.50px;" width="7.6" height="8.6" viewBox="0 0 7.6 8.6"><path d="M6.7 0.7 V7.7" stroke="#2485d6" stroke-width="1.55" fill="none"/><path d="M1.3 0.9 L4.5 4.2 L1.3 7.5" stroke="#2485d6" stroke-width="1.55" fill="none"/></svg>
<svg class="b" style="left:277.00px;top:486.80px;" width="10.2" height="9.6" viewBox="0 0 10.2 9.6"><g stroke="#2f8fd8" stroke-width="1.1" fill="none"><path d="M0.6 3 V1.4 Q0.6 0.6 1.4 0.6 H3"/><path d="M7 0.6 H8.6 Q9.4 0.6 9.4 1.4 V3"/><path d="M0.6 6.4 V8 Q0.6 8.8 1.4 8.8 H3"/><path d="M7 8.8 H8.6 Q9.4 8.8 9.4 8 V6.4"/></g><rect x="3.2" y="2.8" width="3.6" height="3.8" rx="0.6" fill="#a9d2f3" stroke="#2f8fd8" stroke-width="0.8"/></svg>
<svg class="b" style="left:293px;top:486px" width="2" height="2"><rect x="0.55" y="0.80" width="0.90" height="1.00" fill="#ccc5b5"/></svg>
<svg class="b" style="left:293px;top:488px" width="2" height="2"><rect x="0.55" y="0.80" width="0.90" height="1.00" fill="#ccc5b5"/></svg>
<svg class="b" style="left:293px;top:490px" width="2" height="2"><rect x="0.55" y="0.80" width="0.90" height="1.00" fill="#ccc5b5"/></svg>
<svg class="b" style="left:293px;top:492px" width="2" height="2"><rect x="0.55" y="0.80" width="0.90" height="1.00" fill="#ccc5b5"/></svg>
<svg class="b" style="left:293px;top:494px" width="2" height="2"><rect x="0.55" y="0.80" width="0.90" height="1.00" fill="#ccc5b5"/></svg>
<svg class="b" style="left:298.60px;top:486.80px;" width="8.8" height="9.4" viewBox="0 0 8.8 9.4"><path d="M4.4 6.2 V1 M2.2 3 L4.4 0.8 L6.6 3" stroke="#2f8fd8" stroke-width="1.2" fill="none"/><path d="M0.6 5.4 V8.6 H8.2 V5.4" stroke="#2f8fd8" stroke-width="1.1" fill="none"/></svg>
<span class="t" style="left:309.80px;top:487px;font-size:8.50px;line-height:8.50px;color:#949494;transform:translateY(0.20px) rotate(0.05deg);letter-spacing:-0.067px;-webkit-text-stroke:0.15px;">Export data</span>
<svg class="b" style="left:356.00px;top:490.60px;" width="3.2" height="2.2" viewBox="0 0 3.2 2.2"><path d="M0 0H3.2L1.6 2.2Z" fill="#222"/></svg>
<svg class="b" style="left:363px;top:486px" width="2" height="2"><rect x="0.95" y="0.80" width="0.90" height="1.00" fill="#ccc5b5"/></svg>
<svg class="b" style="left:363px;top:488px" width="2" height="2"><rect x="0.95" y="0.80" width="0.90" height="1.00" fill="#ccc5b5"/></svg>
<svg class="b" style="left:363px;top:490px" width="2" height="2"><rect x="0.95" y="0.80" width="0.90" height="1.00" fill="#ccc5b5"/></svg>
<svg class="b" style="left:363px;top:492px" width="2" height="2"><rect x="0.95" y="0.80" width="0.90" height="1.00" fill="#ccc5b5"/></svg>
<svg class="b" style="left:363px;top:494px" width="2" height="2"><rect x="0.95" y="0.80" width="0.90" height="1.00" fill="#ccc5b5"/></svg>
<svg class="b" style="left:368.40px;top:486.80px;" width="9.6" height="9.6" viewBox="0 0 9.6 9.6"><g fill="#2f8fd8"><circle cx="4.8" cy="4.8" r="3.3"/><g stroke="#2f8fd8" stroke-width="1.7"><path d="M4.8 0.3 V9.3"/><path d="M0.9 2.55 L8.7 7.05"/><path d="M0.9 7.05 L8.7 2.55"/></g></g><circle cx="4.8" cy="4.8" r="1.5" fill="#8fc4ee"/></svg>
<div class="b" style="left:382.4px;top:484.6px;width:42.4px;height:12.8px;background:#fff;border:1px solid #f0f0f0;border-radius:1.5px;box-sizing:border-box"></div>
<span class="t" style="left:385.30px;top:487px;font-size:8.50px;line-height:8.50px;color:#222;transform:translateY(0.20px) rotate(0.05deg);letter-spacing:-0.290px;">200</span>
<svg class="b" style="left:429.00px;top:487.20px;" width="10.2" height="8.8" viewBox="0 0 10.2 8.8"><path d="M0.6 0.7 H3 Q5.1 0.7 5.1 2.9 Q5.1 0.7 7.2 0.7 H9.6 M5.1 2.6 V4.8" stroke="#2f8fd8" stroke-width="1.15" fill="none"/><path d="M0.6 5 V8 H9.6 V5" stroke="#2f8fd8" stroke-width="1.1" fill="none"/></svg>
<span class="t" style="left:443.00px;top:487px;font-size:8.50px;line-height:8.50px;color:#444;transform:translateY(0.20px) rotate(0.05deg);letter-spacing:0.218px;">400+</span>
<svg class="b" style="left:467px;top:486px" width="2" height="2"><rect x="0.55" y="0.80" width="0.90" height="1.00" fill="#ccc5b5"/></svg>
<svg class="b" style="left:467px;top:488px" width="2" height="2"><rect x="0.55" y="0.80" width="0.90" height="1.00" fill="#ccc5b5"/></svg>
<svg class="b" style="left:467px;top:490px" width="2" height="2"><rect x="0.55" y="0.80" width="0.90" height="1.00" fill="#ccc5b5"/></svg>
<svg class="b" style="left:467px;top:492px" width="2" height="2"><rect x="0.55" y="0.80" width="0.90" height="1.00" fill="#ccc5b5"/></svg>
<svg class="b" style="left:467px;top:494px" width="2" height="2"><rect x="0.55" y="0.80" width="0.90" height="1.00" fill="#ccc5b5"/></svg>
<svg class="b" style="left:484px;top:490px" width="6" height="2"><rect x="0.50" y="0.30" width="5.00" height="0.80" fill="#dfe6ee"/></svg>
<span class="t" style="left:497.50px;top:487px;font-size:8.50px;line-height:8.50px;color:#1c1c1c;transform:translateY(0.40px) rotate(0.05deg);letter-spacing:0.084px;">400 row(s) fetched - 209ms (7ms fetch), on 2023-08-16 at 13:14:41</span>
<svg class="b" style="left:877.00px;top:487.80px;" width="9.4" height="9.2" viewBox="0 0 9.4 9.2"><rect x="0.1" y="0.2" width="2.9" height="8.8" rx="0.5" fill="#2b87d3"/><rect x="4.2" y="5.7" width="4.8" height="3.3" rx="0.5" fill="#2b87d3"/><path d="M4.8 1.9 Q7.8 1.6 8.4 4.8" stroke="#2b87d3" stroke-width="1.05" fill="none"/><path d="M3.8 2 L5.9 0.3 V3.5 Z" fill="#2b87d3"/></svg>

</div></body></html>
